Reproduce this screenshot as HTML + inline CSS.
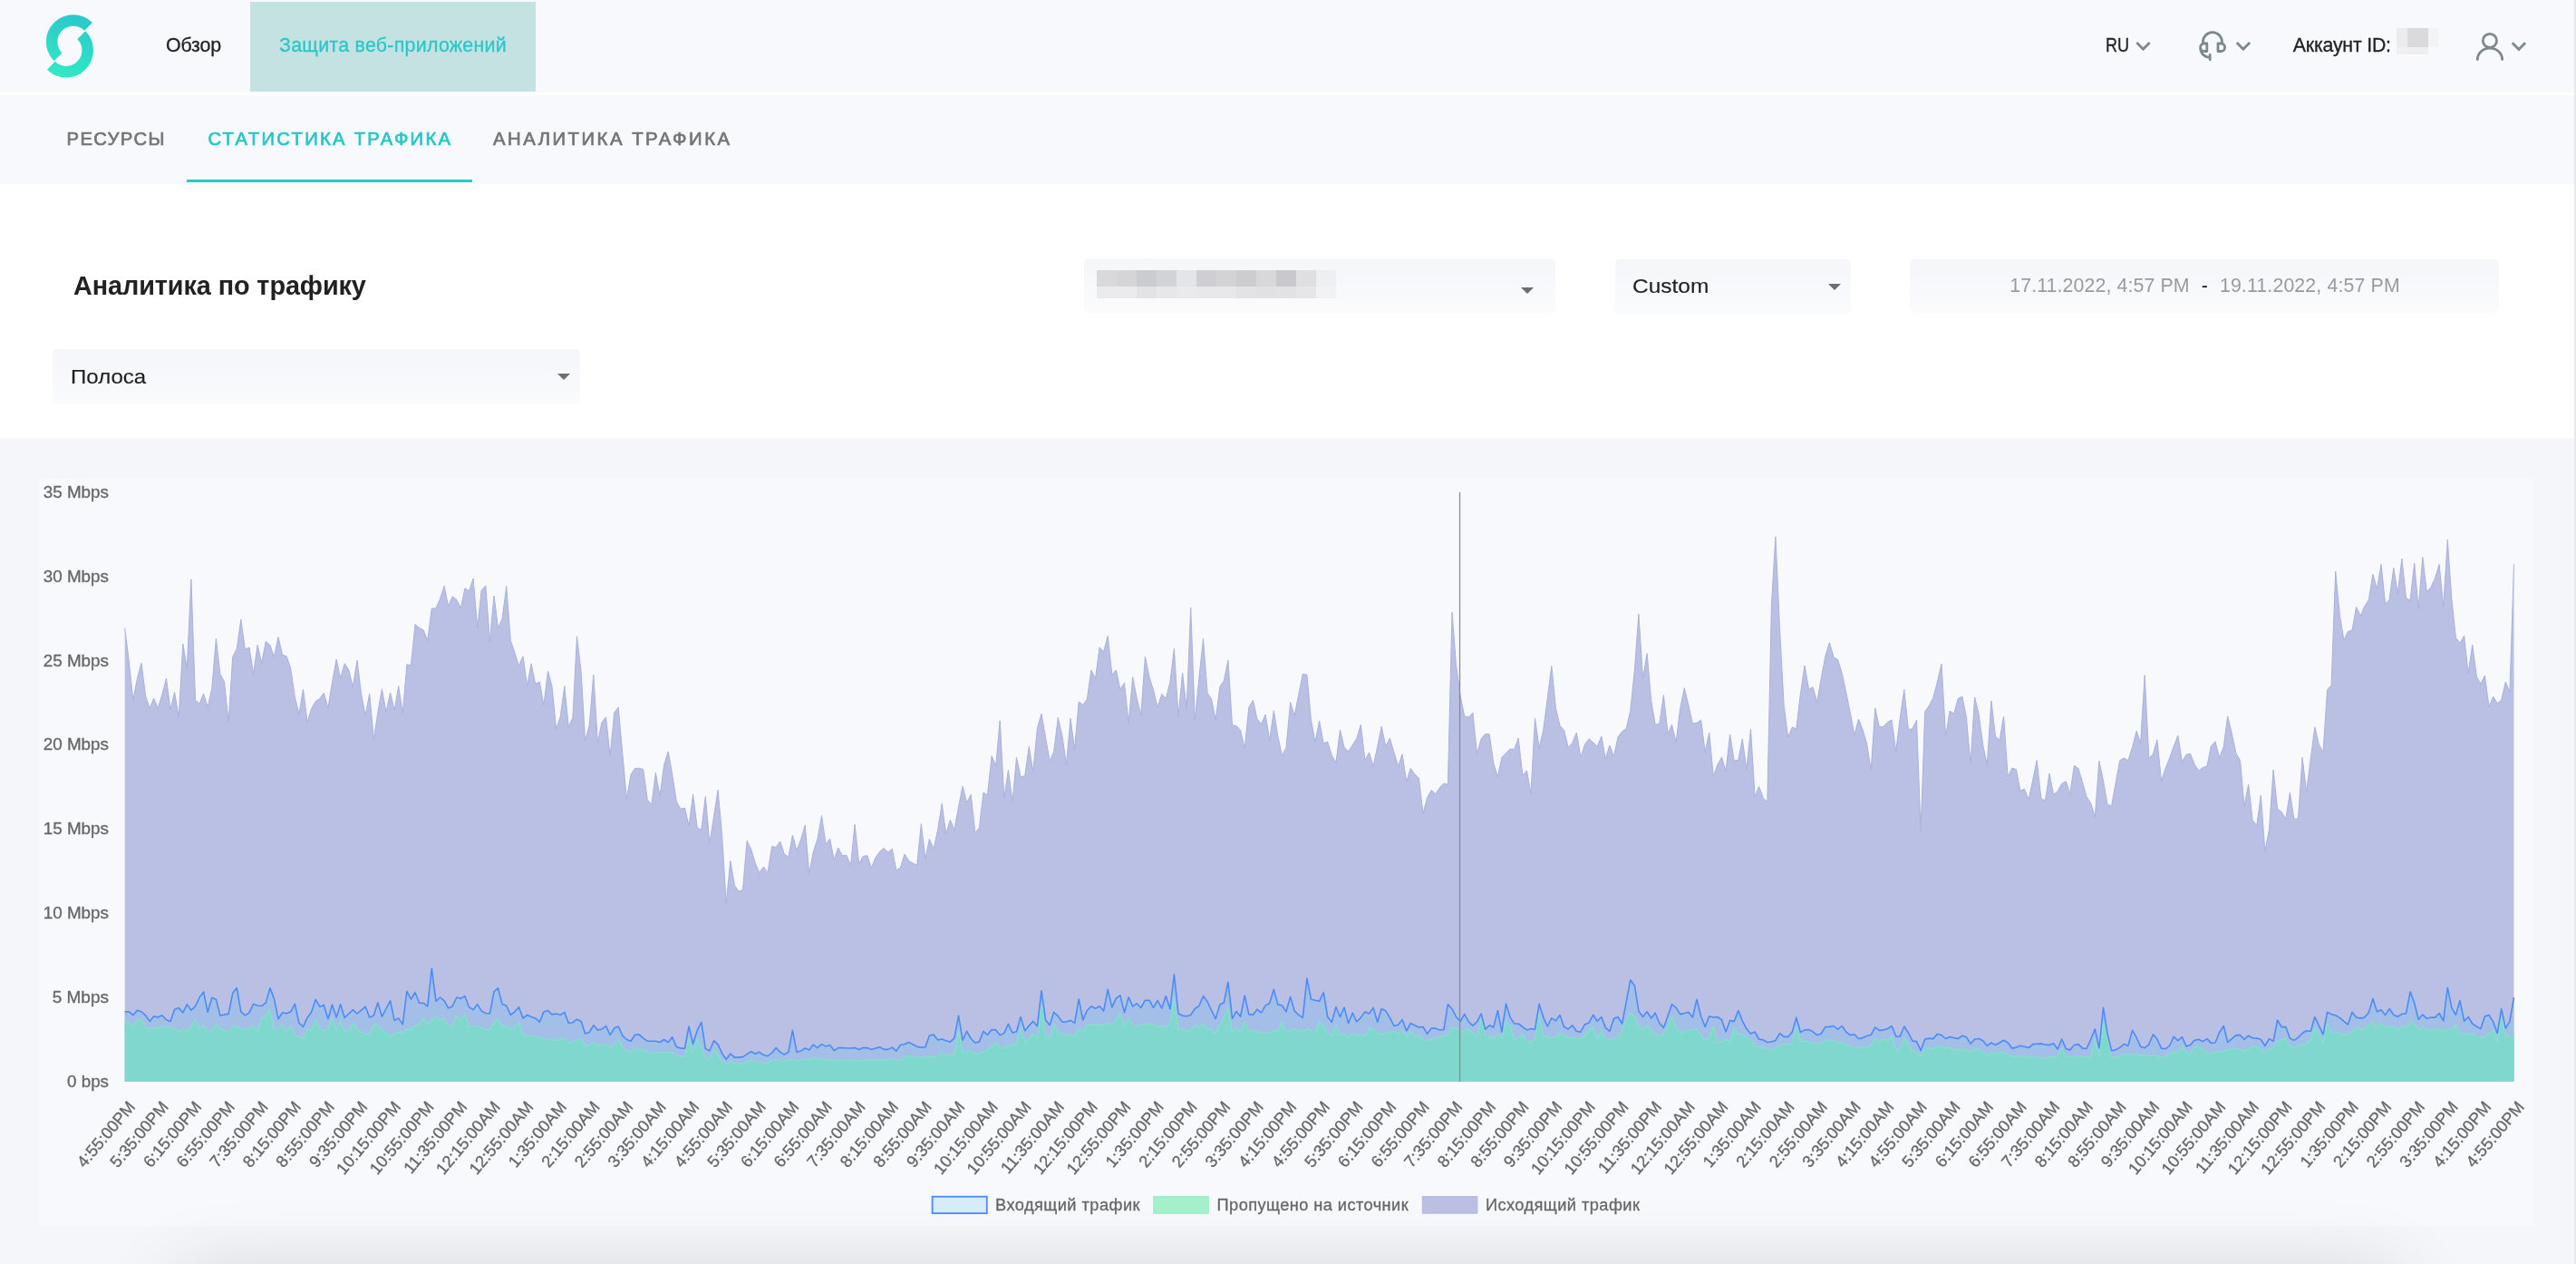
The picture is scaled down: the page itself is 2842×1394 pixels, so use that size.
<!DOCTYPE html>
<html lang="ru"><head><meta charset="utf-8"><title>Статистика трафика</title>
<style>
html,body{margin:0;padding:0;overflow:hidden}
body{width:2842px;height:1394px;overflow:hidden;position:relative;background:#fff;font-family:"Liberation Sans",sans-serif;}
.abs,.t,i{position:absolute;display:block}
.t{white-space:nowrap;line-height:1;}
.sel{position:absolute;border-radius:5px;background:linear-gradient(180deg,#f5f6fa 0%,#fafbfd 100%);}
.tri{position:absolute;width:0;height:0;border-left:7.3px solid transparent;border-right:7.3px solid transparent;border-top:7.4px solid #6e6e70}
svg text{font-family:"Liberation Sans",sans-serif}
</style></head><body><div id="root" style="position:absolute;left:0;top:0;width:2842px;height:1394px;overflow:hidden;will-change:transform">
<div class="abs" style="left:0;top:0;width:2842px;height:102px;background:#f8f9fd"></div>
<div class="abs" style="left:276px;top:2px;width:315px;height:99px;background:#c5e2e2"></div>
<div class="abs" style="left:0;top:105px;width:2842px;height:98px;background:#f8f9fd"></div>
<div class="abs" style="left:206px;top:198px;width:315px;height:3px;background:#26c9c9"></div>
<div class="abs" style="left:0;top:483px;width:2842px;height:911px;background:#f5f6fa"></div>
<div class="abs" style="left:43px;top:528px;width:2752px;height:824px;background:#f8f9fd"></div>
<div class="abs" id="shadow" style="left:228px;top:1440px;width:2385px;height:100px;box-shadow:0 0 90px 30px rgba(0,0,0,0.16)"></div>

<svg class="abs" style="left:40px;top:8px" width="76" height="86" viewBox="40 8 76 86">
<defs><linearGradient id="lg" gradientUnits="userSpaceOnUse" x1="88" y1="15" x2="66" y2="87"><stop offset="0" stop-color="#2ac6cc"/><stop offset="1" stop-color="#31ebc4"/></linearGradient></defs>
<g fill="none" stroke="url(#lg)" stroke-width="12.5">
<path d="M97.54,29.36 A23.67,23.67 0 0 0 64.06,62.84"/>
<path d="M89.8,38.76 A23.67,23.67 0 0 1 56.32,72.24"/>
</g></svg>

<span class="t" id="t_obzor" style="left:183px;top:39.74px;font-size:21.33px;color:#222;letter-spacing:-0.152px;-webkit-text-stroke:0.3px #222;">Обзор</span><span class="t" id="t_zash" style="left:308px;top:39.74px;font-size:21.33px;color:#2ac7c9;letter-spacing:0.289px;-webkit-text-stroke:0.3px #2ac7c9;">Защита веб-приложений</span>
<span class="t" id="t_res" style="left:73.5px;top:142.62px;font-size:20.3px;color:#757575;letter-spacing:1.348px;-webkit-text-stroke:0.7px #757575;">РЕСУРСЫ</span><span class="t" id="t_stat" style="left:229.4px;top:142.62px;font-size:20.3px;color:#26c6c8;letter-spacing:2.255px;-webkit-text-stroke:0.7px #26c6c8;">СТАТИСТИКА ТРАФИКА</span><span class="t" id="t_anal" style="left:544px;top:142.62px;font-size:20.3px;color:#757575;letter-spacing:2.517px;-webkit-text-stroke:0.7px #757575;">АНАЛИТИКА ТРАФИКА</span>
<span class="t" id="t_ru" style="left:2322.7px;top:39.74px;font-size:21.33px;color:#222;letter-spacing:0px;-webkit-text-stroke:0.3px #222;transform:scaleX(0.8471);transform-origin:0 0;">RU</span><span class="t" id="t_acc" style="left:2529.8px;top:39.74px;font-size:21.33px;color:#222;letter-spacing:-0.218px;-webkit-text-stroke:0.3px #222;">Аккаунт ID:</span>
<i style="left:2644.0px;top:31px;width:11.5px;height:20.5px;background:#ececef"></i><i style="left:2655.5px;top:31px;width:11.5px;height:20.5px;background:#dadadd"></i><i style="left:2667.0px;top:31px;width:11.5px;height:20.5px;background:#dadadd"></i><i style="left:2678.5px;top:31px;width:11.5px;height:20.5px;background:#f3f3f6"></i><i style="left:2644.0px;top:51.5px;width:11.5px;height:8.2px;background:#f0f0f3"></i><i style="left:2655.5px;top:51.5px;width:11.5px;height:8.2px;background:#efeff2"></i><i style="left:2667.0px;top:51.5px;width:11.5px;height:8.2px;background:#efeff2"></i><i style="left:2678.5px;top:51.5px;width:11.5px;height:8.2px;background:#f8f9fd"></i>

<svg class="abs" style="left:2300px;top:20px" width="520" height="60" viewBox="2300 20 520 60" fill="none" stroke="#7d8988" stroke-width="2.8">
<path d="M2357.4,47.1 L2364.5,54.2 L2371.6,47.1"/>
<path d="M2467.7,47.1 L2474.9,54.3 L2482.1,47.1"/>
<path d="M2771.7,47.2 L2778.9,54.4 L2786.1,47.2"/>
<path d="M2430.4,48 V46.5 A10.55,10.9 0 0 1 2451.5,46.5 V48"/>
<path d="M2434.8,48 H2431.6 A4,4.25 0 0 0 2431.6,56.5 H2434.8 Z" stroke-linejoin="round"/>
<path d="M2447,48 H2450.6 A4,4.25 0 0 1 2450.6,56.5 H2447 Z" stroke-linejoin="round"/>
<path d="M2427.8,54 C2428,59.5 2432.5,63 2438.2,63.4 M2438.2,60.4 V65.8" stroke-linecap="round"/>
<circle cx="2746.9" cy="44.9" r="7.6"/>
<path d="M2733.3,65.6 A13.65,12.4 0 0 1 2760.6,65.6" stroke-linecap="round"/>
</svg>

<span class="t" id="t_title" style="left:81.1px;top:301.42px;font-size:28.8px;color:#212121;letter-spacing:-0.088px;font-weight:bold;">Аналитика по трафику</span>
<div class="sel" style="left:1196px;top:285px;width:520px;height:60px"></div><i style="left:1210px;top:298px;width:22px;height:18px;background:#d9d9dc"></i><i style="left:1232px;top:298px;width:22px;height:18px;background:#d5d5d8"></i><i style="left:1254px;top:298px;width:22px;height:18px;background:#cbccd0"></i><i style="left:1276px;top:298px;width:22px;height:18px;background:#d2d3d6"></i><i style="left:1298px;top:298px;width:22px;height:18px;background:#e4e5e9"></i><i style="left:1320px;top:298px;width:22px;height:18px;background:#cfcfd3"></i><i style="left:1342px;top:298px;width:22px;height:18px;background:#d3d3d6"></i><i style="left:1364px;top:298px;width:22px;height:18px;background:#cdcdd1"></i><i style="left:1386px;top:298px;width:22px;height:18px;background:#d8d8db"></i><i style="left:1408px;top:298px;width:22px;height:18px;background:#c9c9cd"></i><i style="left:1430px;top:298px;width:22px;height:18px;background:#dfdfe2"></i><i style="left:1452px;top:298px;width:22px;height:18px;background:#eeeff3"></i><i style="left:1210px;top:316px;width:22px;height:13px;background:#ebebee"></i><i style="left:1232px;top:316px;width:22px;height:13px;background:#ebebee"></i><i style="left:1254px;top:316px;width:22px;height:13px;background:#e3e3e7"></i><i style="left:1276px;top:316px;width:22px;height:13px;background:#e7e7eb"></i><i style="left:1298px;top:316px;width:22px;height:13px;background:#eaeaee"></i><i style="left:1320px;top:316px;width:22px;height:13px;background:#e8e8eb"></i><i style="left:1342px;top:316px;width:22px;height:13px;background:#e8e8eb"></i><i style="left:1364px;top:316px;width:22px;height:13px;background:#e3e3e6"></i><i style="left:1386px;top:316px;width:22px;height:13px;background:#e1e1e4"></i><i style="left:1408px;top:316px;width:22px;height:13px;background:#e2e2e5"></i><i style="left:1430px;top:316px;width:22px;height:13px;background:#e6e6e9"></i><i style="left:1452px;top:316px;width:22px;height:13px;background:#f2f2f6"></i>
<div class="tri" style="left:1678px;top:317px"></div>
<div class="sel" style="left:1782px;top:286px;width:260px;height:61px"></div><span class="t" id="t_custom" style="left:1801.2px;top:304.41px;font-size:22.67px;color:#1f1f1f;letter-spacing:0px;-webkit-text-stroke:0.15px #1f1f1f;transform:scaleX(1.0799);transform-origin:0 0;">Custom</span>
<div class="tri" style="left:2017px;top:313px"></div>
<div class="sel" style="left:2107px;top:286px;width:650px;height:59px"></div><span class="t" id="t_d1" style="left:2217.2px;top:304.54px;font-size:21.33px;color:#9a9a9a;letter-spacing:0.108px;">17.11.2022, 4:57 PM</span><span class="t" id="t_dash" style="left:2428.7px;top:304.54px;font-size:21.33px;color:#111;letter-spacing:0px;">-</span><span class="t" id="t_d2" style="left:2448.9px;top:304.54px;font-size:21.33px;color:#9a9a9a;letter-spacing:0.13px;">19.11.2022, 4:57 PM</span>
<div class="sel" style="left:58px;top:385px;width:582px;height:61px"></div><span class="t" id="t_polosa" style="left:78.4px;top:403.51px;font-size:22.67px;color:#1f1f1f;letter-spacing:0px;-webkit-text-stroke:0.15px #1f1f1f;transform:scaleX(1.0614);transform-origin:0 0;">Полоса</span>
<div class="tri" style="left:614.6px;top:412px"></div>

<svg class="abs" style="left:0;top:483px" width="2842" height="911" viewBox="0 483 2842 911">
<polygon points="137.7,1192.8 137.7,692.5 142.3,729.7 146.9,772.3 151.4,748.4 156.0,731.3 160.6,767.6 165.2,781.1 169.7,770.2 174.3,781.1 178.9,765.9 183.5,748.1 188.0,782.8 192.6,763.3 197.2,791.6 201.8,710.1 206.3,737.4 210.9,638.9 215.5,772.0 220.1,776.0 224.6,765.0 229.2,779.9 233.8,758.9 238.4,704.2 242.9,743.7 247.5,751.9 252.1,796.5 256.7,724.5 261.3,715.2 265.8,683.2 270.4,716.1 275.0,714.0 279.6,743.3 284.1,711.4 288.7,731.3 293.3,707.2 297.9,711.4 302.4,724.5 307.0,702.6 311.6,722.2 316.2,723.9 320.7,737.1 325.3,768.5 329.9,787.4 334.5,760.1 339.0,796.5 343.6,781.6 348.2,773.4 352.8,770.6 357.3,764.3 361.9,780.7 366.5,752.8 371.1,727.1 375.7,747.9 380.2,731.8 384.8,739.1 389.4,757.5 394.0,728.3 398.5,765.0 403.1,789.1 407.7,765.0 412.3,815.3 416.8,786.0 421.4,759.8 426.0,785.6 430.6,764.0 435.1,783.7 439.7,756.6 444.3,786.5 448.9,732.7 453.4,733.9 458.0,688.5 462.6,692.5 467.2,694.8 471.7,706.5 476.3,671.0 480.9,671.0 485.5,660.5 490.1,646.2 494.6,668.6 499.2,657.9 503.8,661.4 508.4,670.7 512.9,648.8 517.5,651.8 522.1,638.0 526.7,692.5 531.2,651.1 535.8,645.9 540.4,707.4 545.0,657.0 549.5,693.0 554.1,682.0 558.7,646.6 563.3,706.5 567.8,719.6 572.4,734.4 577.0,723.9 581.6,756.4 586.1,731.9 590.7,754.3 595.3,752.0 599.9,778.2 604.5,740.3 609.0,756.9 613.6,804.4 618.2,790.5 622.8,756.7 627.3,802.2 631.9,791.3 636.5,701.9 641.1,740.7 645.6,817.2 650.2,800.1 654.8,744.2 659.4,819.6 663.9,796.9 668.5,790.8 673.1,834.1 677.7,786.1 682.2,780.0 686.8,831.5 691.4,881.3 696.0,854.2 700.5,847.6 705.1,847.2 709.7,848.5 714.3,882.2 718.9,887.4 723.4,852.1 728.0,878.3 732.6,843.7 737.2,828.9 741.7,854.2 746.3,883.9 750.9,892.3 755.5,891.1 760.0,910.8 764.6,875.9 769.2,912.6 773.8,915.2 778.3,878.5 782.9,930.1 787.5,900.7 792.1,871.2 796.6,921.3 801.2,996.5 805.8,949.3 810.4,976.4 814.9,983.0 819.5,981.6 824.1,927.1 828.7,936.7 833.3,951.9 837.8,962.4 842.4,955.9 847.0,962.4 851.6,933.6 856.1,934.4 860.7,928.0 865.3,941.8 869.9,945.3 874.4,921.0 879.0,937.9 883.6,925.7 888.2,910.0 892.7,963.3 897.3,939.7 901.9,925.3 906.5,899.5 911.0,930.9 915.6,925.2 920.2,948.1 924.8,935.0 929.3,943.7 933.9,943.2 938.5,954.5 943.1,909.1 947.7,952.8 952.2,944.4 956.8,943.5 961.4,957.1 966.0,945.8 970.5,939.3 975.1,935.3 979.7,940.0 984.3,936.2 988.8,959.8 993.4,957.1 998.0,941.9 1002.6,949.3 1007.1,951.9 1011.7,954.2 1016.3,908.7 1020.9,947.2 1025.4,925.3 1030.0,936.2 1034.6,915.2 1039.2,886.4 1043.7,919.6 1048.3,904.2 1052.9,915.2 1057.5,889.9 1062.1,867.2 1066.6,885.2 1071.2,876.3 1075.8,918.2 1080.4,912.9 1084.9,874.2 1089.5,876.8 1094.1,833.6 1098.7,844.5 1103.2,794.9 1107.8,880.3 1112.4,849.4 1117.0,884.3 1121.5,835.4 1126.1,856.7 1130.7,855.8 1135.3,823.3 1139.8,851.4 1144.4,802.9 1149.0,787.2 1153.6,813.7 1158.1,839.1 1162.7,828.9 1167.3,791.4 1171.9,811.5 1176.5,843.4 1181.0,792.3 1185.6,826.3 1190.2,773.9 1194.8,777.4 1199.3,771.3 1203.9,739.1 1208.5,748.7 1213.1,713.8 1217.6,719.0 1222.2,701.4 1226.8,743.9 1231.4,739.1 1235.9,760.5 1240.5,753.1 1245.1,797.5 1249.7,746.8 1254.2,770.1 1258.8,788.8 1263.4,724.1 1268.0,746.8 1272.5,761.0 1277.1,780.2 1281.7,765.3 1286.3,770.4 1290.9,752.2 1295.4,715.4 1300.0,790.7 1304.6,742.1 1309.2,781.4 1313.7,670.0 1318.3,794.5 1322.9,747.4 1327.5,704.5 1332.0,763.9 1336.6,771.3 1341.2,794.0 1345.8,757.5 1350.3,750.8 1354.9,728.1 1359.5,799.8 1364.1,800.6 1368.6,805.4 1373.2,825.6 1377.8,780.2 1382.4,772.2 1386.9,792.8 1391.5,798.4 1396.1,788.1 1400.7,816.4 1405.3,783.7 1409.8,812.0 1414.4,833.3 1419.0,824.2 1423.6,774.4 1428.1,789.3 1432.7,766.2 1437.3,743.3 1441.9,744.2 1446.4,793.6 1451.0,818.5 1455.6,795.0 1460.2,819.9 1464.7,818.1 1469.3,833.0 1473.9,841.2 1478.5,805.0 1483.0,824.2 1487.6,828.9 1492.2,821.6 1496.8,814.6 1501.3,799.2 1505.9,838.2 1510.5,830.0 1515.1,845.2 1519.7,823.3 1524.2,801.0 1528.8,823.4 1533.4,814.1 1538.0,829.9 1542.5,845.2 1547.1,831.9 1551.7,862.2 1556.3,847.3 1560.8,853.8 1565.4,858.2 1570.0,897.1 1574.6,879.6 1579.1,871.4 1583.7,875.6 1588.3,868.8 1592.9,863.9 1597.4,865.3 1602.0,675.2 1606.6,734.6 1611.2,767.0 1615.7,790.0 1620.3,791.1 1624.9,786.2 1629.5,831.6 1634.1,815.0 1638.6,809.4 1643.2,809.8 1647.8,842.1 1652.4,856.6 1656.9,835.4 1661.5,830.7 1666.1,826.0 1670.7,826.4 1675.2,814.1 1679.8,855.2 1684.4,849.9 1689.0,875.3 1693.5,792.3 1698.1,825.1 1702.7,805.4 1707.3,769.6 1711.8,734.3 1716.4,780.9 1721.0,800.2 1725.6,805.4 1730.1,824.3 1734.7,819.4 1739.3,808.0 1743.9,835.1 1748.5,821.1 1753.0,814.7 1757.6,818.8 1762.2,823.2 1766.8,812.0 1771.3,836.8 1775.9,822.0 1780.5,834.2 1785.1,812.4 1789.6,806.8 1794.2,803.6 1798.8,783.6 1803.4,738.5 1807.9,677.5 1812.5,748.3 1817.1,720.7 1821.7,772.7 1826.2,799.3 1830.8,798.1 1835.4,766.6 1840.0,809.2 1844.5,799.3 1849.1,818.5 1853.7,781.3 1858.3,758.7 1862.9,778.0 1867.4,798.1 1872.0,797.2 1876.6,794.0 1881.2,829.3 1885.7,808.0 1890.3,856.1 1894.9,843.3 1899.5,835.1 1904.0,850.8 1908.6,810.1 1913.2,838.9 1917.8,838.2 1922.3,815.0 1926.9,849.1 1931.5,804.2 1936.1,878.8 1940.6,867.4 1945.2,879.7 1949.8,884.9 1954.4,667.4 1958.9,591.9 1963.5,693.6 1968.1,777.4 1972.7,813.3 1977.3,801.9 1981.8,804.0 1986.4,765.2 1991.0,734.1 1995.6,760.5 2000.1,757.8 2004.7,774.3 2009.3,747.7 2013.9,723.3 2018.4,708.8 2023.0,724.7 2027.6,727.6 2032.2,742.5 2036.7,763.4 2041.3,786.1 2045.9,810.7 2050.5,793.2 2055.0,804.5 2059.6,820.3 2064.2,849.6 2068.8,781.0 2073.3,801.6 2077.9,801.6 2082.5,796.2 2087.1,794.1 2091.7,828.7 2096.2,792.3 2100.8,760.5 2105.4,804.5 2110.0,803.7 2114.5,794.1 2119.1,917.2 2123.7,784.8 2128.3,778.3 2132.8,769.6 2137.4,752.1 2142.0,732.0 2146.6,812.1 2151.1,784.1 2155.7,787.1 2160.3,770.4 2164.9,768.2 2169.4,791.1 2174.0,842.6 2178.6,769.0 2183.2,788.3 2187.7,821.5 2192.3,843.5 2196.9,773.0 2201.5,812.1 2206.1,816.3 2210.6,790.0 2215.2,857.0 2219.8,847.0 2224.4,848.6 2228.9,872.3 2233.5,870.1 2238.1,881.9 2242.7,860.5 2247.2,838.6 2251.8,880.2 2256.4,883.5 2261.0,853.1 2265.5,876.2 2270.1,872.7 2274.7,864.3 2279.3,861.7 2283.8,875.3 2288.4,844.2 2293.0,847.4 2297.6,863.1 2302.1,878.8 2306.7,885.8 2311.3,901.2 2315.9,839.1 2320.5,861.3 2325.0,887.2 2329.6,888.8 2334.2,863.1 2338.8,838.6 2343.3,836.0 2347.9,838.6 2352.5,824.3 2357.1,806.3 2361.6,819.9 2366.2,744.7 2370.8,836.0 2375.4,831.6 2379.9,815.9 2384.5,861.3 2389.1,847.4 2393.7,836.0 2398.2,823.2 2402.8,811.2 2407.4,840.4 2412.0,832.2 2416.5,831.3 2421.1,843.0 2425.7,850.0 2430.3,846.5 2434.9,845.1 2439.4,822.9 2444.0,817.7 2448.6,835.5 2453.2,823.8 2457.7,790.0 2462.3,808.9 2466.9,830.8 2471.5,838.6 2476.0,889.3 2480.6,865.2 2485.2,904.5 2489.8,910.2 2494.3,877.1 2498.9,939.1 2503.5,914.6 2508.1,849.1 2512.6,892.3 2517.2,895.4 2521.8,903.3 2526.4,873.9 2530.9,903.3 2535.5,902.9 2540.1,835.5 2544.7,873.2 2549.3,836.9 2553.8,801.9 2558.4,821.1 2563.0,829.4 2567.6,760.8 2572.1,755.6 2576.7,630.1 2581.3,677.8 2585.9,706.1 2590.4,696.5 2595.0,695.0 2599.6,669.4 2604.2,679.2 2608.7,668.7 2613.3,661.6 2617.9,633.3 2622.5,649.5 2627.0,622.3 2631.6,666.1 2636.2,661.2 2640.8,626.3 2645.3,654.6 2649.9,616.2 2654.5,659.5 2659.1,662.1 2663.7,621.1 2668.2,671.4 2672.8,614.4 2677.4,653.0 2682.0,647.3 2686.5,637.7 2691.1,622.3 2695.7,669.4 2700.3,595.2 2704.8,660.4 2709.4,703.2 2714.0,709.3 2718.6,701.1 2723.1,742.8 2727.7,711.0 2732.3,746.0 2736.9,754.2 2741.4,745.1 2746.0,779.5 2750.6,768.2 2755.2,775.7 2759.7,772.2 2764.3,752.1 2768.9,763.4 2773.5,622.3 2773.5,1192.8" fill="#b9c0e3"/>
<polyline points="137.7,692.5 142.3,729.7 146.9,772.3 151.4,748.4 156.0,731.3 160.6,767.6 165.2,781.1 169.7,770.2 174.3,781.1 178.9,765.9 183.5,748.1 188.0,782.8 192.6,763.3 197.2,791.6 201.8,710.1 206.3,737.4 210.9,638.9 215.5,772.0 220.1,776.0 224.6,765.0 229.2,779.9 233.8,758.9 238.4,704.2 242.9,743.7 247.5,751.9 252.1,796.5 256.7,724.5 261.3,715.2 265.8,683.2 270.4,716.1 275.0,714.0 279.6,743.3 284.1,711.4 288.7,731.3 293.3,707.2 297.9,711.4 302.4,724.5 307.0,702.6 311.6,722.2 316.2,723.9 320.7,737.1 325.3,768.5 329.9,787.4 334.5,760.1 339.0,796.5 343.6,781.6 348.2,773.4 352.8,770.6 357.3,764.3 361.9,780.7 366.5,752.8 371.1,727.1 375.7,747.9 380.2,731.8 384.8,739.1 389.4,757.5 394.0,728.3 398.5,765.0 403.1,789.1 407.7,765.0 412.3,815.3 416.8,786.0 421.4,759.8 426.0,785.6 430.6,764.0 435.1,783.7 439.7,756.6 444.3,786.5 448.9,732.7 453.4,733.9 458.0,688.5 462.6,692.5 467.2,694.8 471.7,706.5 476.3,671.0 480.9,671.0 485.5,660.5 490.1,646.2 494.6,668.6 499.2,657.9 503.8,661.4 508.4,670.7 512.9,648.8 517.5,651.8 522.1,638.0 526.7,692.5 531.2,651.1 535.8,645.9 540.4,707.4 545.0,657.0 549.5,693.0 554.1,682.0 558.7,646.6 563.3,706.5 567.8,719.6 572.4,734.4 577.0,723.9 581.6,756.4 586.1,731.9 590.7,754.3 595.3,752.0 599.9,778.2 604.5,740.3 609.0,756.9 613.6,804.4 618.2,790.5 622.8,756.7 627.3,802.2 631.9,791.3 636.5,701.9 641.1,740.7 645.6,817.2 650.2,800.1 654.8,744.2 659.4,819.6 663.9,796.9 668.5,790.8 673.1,834.1 677.7,786.1 682.2,780.0 686.8,831.5 691.4,881.3 696.0,854.2 700.5,847.6 705.1,847.2 709.7,848.5 714.3,882.2 718.9,887.4 723.4,852.1 728.0,878.3 732.6,843.7 737.2,828.9 741.7,854.2 746.3,883.9 750.9,892.3 755.5,891.1 760.0,910.8 764.6,875.9 769.2,912.6 773.8,915.2 778.3,878.5 782.9,930.1 787.5,900.7 792.1,871.2 796.6,921.3 801.2,996.5 805.8,949.3 810.4,976.4 814.9,983.0 819.5,981.6 824.1,927.1 828.7,936.7 833.3,951.9 837.8,962.4 842.4,955.9 847.0,962.4 851.6,933.6 856.1,934.4 860.7,928.0 865.3,941.8 869.9,945.3 874.4,921.0 879.0,937.9 883.6,925.7 888.2,910.0 892.7,963.3 897.3,939.7 901.9,925.3 906.5,899.5 911.0,930.9 915.6,925.2 920.2,948.1 924.8,935.0 929.3,943.7 933.9,943.2 938.5,954.5 943.1,909.1 947.7,952.8 952.2,944.4 956.8,943.5 961.4,957.1 966.0,945.8 970.5,939.3 975.1,935.3 979.7,940.0 984.3,936.2 988.8,959.8 993.4,957.1 998.0,941.9 1002.6,949.3 1007.1,951.9 1011.7,954.2 1016.3,908.7 1020.9,947.2 1025.4,925.3 1030.0,936.2 1034.6,915.2 1039.2,886.4 1043.7,919.6 1048.3,904.2 1052.9,915.2 1057.5,889.9 1062.1,867.2 1066.6,885.2 1071.2,876.3 1075.8,918.2 1080.4,912.9 1084.9,874.2 1089.5,876.8 1094.1,833.6 1098.7,844.5 1103.2,794.9 1107.8,880.3 1112.4,849.4 1117.0,884.3 1121.5,835.4 1126.1,856.7 1130.7,855.8 1135.3,823.3 1139.8,851.4 1144.4,802.9 1149.0,787.2 1153.6,813.7 1158.1,839.1 1162.7,828.9 1167.3,791.4 1171.9,811.5 1176.5,843.4 1181.0,792.3 1185.6,826.3 1190.2,773.9 1194.8,777.4 1199.3,771.3 1203.9,739.1 1208.5,748.7 1213.1,713.8 1217.6,719.0 1222.2,701.4 1226.8,743.9 1231.4,739.1 1235.9,760.5 1240.5,753.1 1245.1,797.5 1249.7,746.8 1254.2,770.1 1258.8,788.8 1263.4,724.1 1268.0,746.8 1272.5,761.0 1277.1,780.2 1281.7,765.3 1286.3,770.4 1290.9,752.2 1295.4,715.4 1300.0,790.7 1304.6,742.1 1309.2,781.4 1313.7,670.0 1318.3,794.5 1322.9,747.4 1327.5,704.5 1332.0,763.9 1336.6,771.3 1341.2,794.0 1345.8,757.5 1350.3,750.8 1354.9,728.1 1359.5,799.8 1364.1,800.6 1368.6,805.4 1373.2,825.6 1377.8,780.2 1382.4,772.2 1386.9,792.8 1391.5,798.4 1396.1,788.1 1400.7,816.4 1405.3,783.7 1409.8,812.0 1414.4,833.3 1419.0,824.2 1423.6,774.4 1428.1,789.3 1432.7,766.2 1437.3,743.3 1441.9,744.2 1446.4,793.6 1451.0,818.5 1455.6,795.0 1460.2,819.9 1464.7,818.1 1469.3,833.0 1473.9,841.2 1478.5,805.0 1483.0,824.2 1487.6,828.9 1492.2,821.6 1496.8,814.6 1501.3,799.2 1505.9,838.2 1510.5,830.0 1515.1,845.2 1519.7,823.3 1524.2,801.0 1528.8,823.4 1533.4,814.1 1538.0,829.9 1542.5,845.2 1547.1,831.9 1551.7,862.2 1556.3,847.3 1560.8,853.8 1565.4,858.2 1570.0,897.1 1574.6,879.6 1579.1,871.4 1583.7,875.6 1588.3,868.8 1592.9,863.9 1597.4,865.3 1602.0,675.2 1606.6,734.6 1611.2,767.0 1615.7,790.0 1620.3,791.1 1624.9,786.2 1629.5,831.6 1634.1,815.0 1638.6,809.4 1643.2,809.8 1647.8,842.1 1652.4,856.6 1656.9,835.4 1661.5,830.7 1666.1,826.0 1670.7,826.4 1675.2,814.1 1679.8,855.2 1684.4,849.9 1689.0,875.3 1693.5,792.3 1698.1,825.1 1702.7,805.4 1707.3,769.6 1711.8,734.3 1716.4,780.9 1721.0,800.2 1725.6,805.4 1730.1,824.3 1734.7,819.4 1739.3,808.0 1743.9,835.1 1748.5,821.1 1753.0,814.7 1757.6,818.8 1762.2,823.2 1766.8,812.0 1771.3,836.8 1775.9,822.0 1780.5,834.2 1785.1,812.4 1789.6,806.8 1794.2,803.6 1798.8,783.6 1803.4,738.5 1807.9,677.5 1812.5,748.3 1817.1,720.7 1821.7,772.7 1826.2,799.3 1830.8,798.1 1835.4,766.6 1840.0,809.2 1844.5,799.3 1849.1,818.5 1853.7,781.3 1858.3,758.7 1862.9,778.0 1867.4,798.1 1872.0,797.2 1876.6,794.0 1881.2,829.3 1885.7,808.0 1890.3,856.1 1894.9,843.3 1899.5,835.1 1904.0,850.8 1908.6,810.1 1913.2,838.9 1917.8,838.2 1922.3,815.0 1926.9,849.1 1931.5,804.2 1936.1,878.8 1940.6,867.4 1945.2,879.7 1949.8,884.9 1954.4,667.4 1958.9,591.9 1963.5,693.6 1968.1,777.4 1972.7,813.3 1977.3,801.9 1981.8,804.0 1986.4,765.2 1991.0,734.1 1995.6,760.5 2000.1,757.8 2004.7,774.3 2009.3,747.7 2013.9,723.3 2018.4,708.8 2023.0,724.7 2027.6,727.6 2032.2,742.5 2036.7,763.4 2041.3,786.1 2045.9,810.7 2050.5,793.2 2055.0,804.5 2059.6,820.3 2064.2,849.6 2068.8,781.0 2073.3,801.6 2077.9,801.6 2082.5,796.2 2087.1,794.1 2091.7,828.7 2096.2,792.3 2100.8,760.5 2105.4,804.5 2110.0,803.7 2114.5,794.1 2119.1,917.2 2123.7,784.8 2128.3,778.3 2132.8,769.6 2137.4,752.1 2142.0,732.0 2146.6,812.1 2151.1,784.1 2155.7,787.1 2160.3,770.4 2164.9,768.2 2169.4,791.1 2174.0,842.6 2178.6,769.0 2183.2,788.3 2187.7,821.5 2192.3,843.5 2196.9,773.0 2201.5,812.1 2206.1,816.3 2210.6,790.0 2215.2,857.0 2219.8,847.0 2224.4,848.6 2228.9,872.3 2233.5,870.1 2238.1,881.9 2242.7,860.5 2247.2,838.6 2251.8,880.2 2256.4,883.5 2261.0,853.1 2265.5,876.2 2270.1,872.7 2274.7,864.3 2279.3,861.7 2283.8,875.3 2288.4,844.2 2293.0,847.4 2297.6,863.1 2302.1,878.8 2306.7,885.8 2311.3,901.2 2315.9,839.1 2320.5,861.3 2325.0,887.2 2329.6,888.8 2334.2,863.1 2338.8,838.6 2343.3,836.0 2347.9,838.6 2352.5,824.3 2357.1,806.3 2361.6,819.9 2366.2,744.7 2370.8,836.0 2375.4,831.6 2379.9,815.9 2384.5,861.3 2389.1,847.4 2393.7,836.0 2398.2,823.2 2402.8,811.2 2407.4,840.4 2412.0,832.2 2416.5,831.3 2421.1,843.0 2425.7,850.0 2430.3,846.5 2434.9,845.1 2439.4,822.9 2444.0,817.7 2448.6,835.5 2453.2,823.8 2457.7,790.0 2462.3,808.9 2466.9,830.8 2471.5,838.6 2476.0,889.3 2480.6,865.2 2485.2,904.5 2489.8,910.2 2494.3,877.1 2498.9,939.1 2503.5,914.6 2508.1,849.1 2512.6,892.3 2517.2,895.4 2521.8,903.3 2526.4,873.9 2530.9,903.3 2535.5,902.9 2540.1,835.5 2544.7,873.2 2549.3,836.9 2553.8,801.9 2558.4,821.1 2563.0,829.4 2567.6,760.8 2572.1,755.6 2576.7,630.1 2581.3,677.8 2585.9,706.1 2590.4,696.5 2595.0,695.0 2599.6,669.4 2604.2,679.2 2608.7,668.7 2613.3,661.6 2617.9,633.3 2622.5,649.5 2627.0,622.3 2631.6,666.1 2636.2,661.2 2640.8,626.3 2645.3,654.6 2649.9,616.2 2654.5,659.5 2659.1,662.1 2663.7,621.1 2668.2,671.4 2672.8,614.4 2677.4,653.0 2682.0,647.3 2686.5,637.7 2691.1,622.3 2695.7,669.4 2700.3,595.2 2704.8,660.4 2709.4,703.2 2714.0,709.3 2718.6,701.1 2723.1,742.8 2727.7,711.0 2732.3,746.0 2736.9,754.2 2741.4,745.1 2746.0,779.5 2750.6,768.2 2755.2,775.7 2759.7,772.2 2764.3,752.1 2768.9,763.4 2773.5,622.3" fill="none" stroke="#aab1dd" stroke-width="1" stroke-linejoin="round"/>
<polygon points="137.7,1192.8 137.7,1115.8 142.3,1115.8 146.9,1119.4 151.4,1114.2 156.0,1115.8 160.6,1119.8 165.2,1126.4 169.7,1120.8 174.3,1121.9 178.9,1119.8 183.5,1124.7 188.0,1126.4 192.6,1113.2 197.2,1111.6 201.8,1116.8 206.3,1107.6 210.9,1114.2 215.5,1109.8 220.1,1100.0 224.6,1093.9 229.2,1116.3 233.8,1100.2 238.4,1102.3 242.9,1120.1 247.5,1118.9 252.1,1118.4 256.7,1095.3 261.3,1089.6 265.8,1115.8 270.4,1119.8 275.0,1116.8 279.6,1107.2 284.1,1109.0 288.7,1109.3 293.3,1105.8 297.9,1089.6 302.4,1101.4 307.0,1123.8 311.6,1116.8 316.2,1117.7 320.7,1115.8 325.3,1107.2 329.9,1128.2 334.5,1132.4 339.0,1122.4 343.6,1116.3 348.2,1102.3 352.8,1110.2 357.3,1108.4 361.9,1123.8 366.5,1107.9 371.1,1121.9 375.7,1107.6 380.2,1122.4 384.8,1118.0 389.4,1113.7 394.0,1118.0 398.5,1114.2 403.1,1110.2 407.7,1121.9 412.3,1120.1 416.8,1105.8 421.4,1121.2 426.0,1112.5 430.6,1103.7 435.1,1125.4 439.7,1122.9 444.3,1129.9 448.9,1093.2 453.4,1102.0 458.0,1094.5 462.6,1106.2 467.2,1106.2 471.7,1109.8 476.3,1068.1 480.9,1104.1 485.5,1100.0 490.1,1103.7 494.6,1111.9 499.2,1109.7 503.8,1100.0 508.4,1101.1 512.9,1098.5 517.5,1110.7 522.1,1113.7 526.7,1107.6 531.2,1114.9 535.8,1117.5 540.4,1117.7 545.0,1093.6 549.5,1089.7 554.1,1107.6 558.7,1109.0 563.3,1119.4 567.8,1115.8 572.4,1110.7 577.0,1122.9 581.6,1119.3 586.1,1121.5 590.7,1122.9 595.3,1127.1 599.9,1115.9 604.5,1114.5 609.0,1118.9 613.6,1118.0 618.2,1119.3 622.8,1116.3 627.3,1128.2 631.9,1127.7 636.5,1124.2 641.1,1126.3 645.6,1139.9 650.2,1138.5 654.8,1130.8 659.4,1135.9 663.9,1135.2 668.5,1131.5 673.1,1141.6 677.7,1133.8 682.2,1132.0 686.8,1142.2 691.4,1146.5 696.0,1148.3 700.5,1141.3 705.1,1140.8 709.7,1145.1 714.3,1148.1 718.9,1148.3 723.4,1148.3 728.0,1149.5 732.6,1146.5 737.2,1149.5 741.7,1143.7 746.3,1154.4 750.9,1156.1 755.5,1156.1 760.0,1132.0 764.6,1151.2 769.2,1136.4 773.8,1127.3 778.3,1156.5 782.9,1158.7 787.5,1147.7 792.1,1151.8 796.6,1161.7 801.2,1168.2 805.8,1162.2 810.4,1166.1 814.9,1166.1 819.5,1165.6 824.1,1162.6 828.7,1159.6 833.3,1162.2 837.8,1160.3 842.4,1163.5 847.0,1164.7 851.6,1161.2 856.1,1155.6 860.7,1160.3 865.3,1163.1 869.9,1160.3 874.4,1136.4 879.0,1160.3 883.6,1159.1 888.2,1156.0 892.7,1157.9 897.3,1152.1 901.9,1155.6 906.5,1151.6 911.0,1153.9 915.6,1152.6 920.2,1158.6 924.8,1155.6 929.3,1155.6 933.9,1156.0 938.5,1156.0 943.1,1155.6 947.7,1157.4 952.2,1155.6 956.8,1155.6 961.4,1157.4 966.0,1156.1 970.5,1154.7 975.1,1157.4 979.7,1157.4 984.3,1155.1 988.8,1159.1 993.4,1152.5 998.0,1151.8 1002.6,1149.5 1007.1,1151.8 1011.7,1154.2 1016.3,1155.1 1020.9,1154.7 1025.4,1142.0 1030.0,1141.1 1034.6,1146.9 1039.2,1146.0 1043.7,1147.7 1048.3,1149.1 1052.9,1144.8 1057.5,1120.1 1062.1,1147.2 1066.6,1137.3 1071.2,1145.5 1075.8,1150.0 1080.4,1149.1 1084.9,1137.3 1089.5,1141.3 1094.1,1135.5 1098.7,1135.9 1103.2,1141.6 1107.8,1139.4 1112.4,1129.4 1117.0,1139.0 1121.5,1137.8 1126.1,1121.5 1130.7,1136.7 1135.3,1131.1 1139.8,1126.4 1144.4,1131.7 1149.0,1092.7 1153.6,1125.0 1158.1,1130.6 1162.7,1116.3 1167.3,1120.7 1171.9,1127.1 1176.5,1126.8 1181.0,1125.4 1185.6,1128.2 1190.2,1101.8 1194.8,1125.0 1199.3,1114.5 1203.9,1109.7 1208.5,1112.3 1213.1,1109.7 1217.6,1115.1 1222.2,1091.3 1226.8,1111.1 1231.4,1100.9 1235.9,1097.6 1240.5,1116.8 1245.1,1099.7 1249.7,1109.8 1254.2,1106.7 1258.8,1111.4 1263.4,1103.2 1268.0,1103.2 1272.5,1111.4 1277.1,1103.5 1281.7,1111.9 1286.3,1098.5 1290.9,1112.8 1295.4,1074.9 1300.0,1118.0 1304.6,1120.1 1309.2,1120.7 1313.7,1119.4 1318.3,1112.5 1322.9,1109.3 1327.5,1098.5 1332.0,1104.6 1336.6,1114.5 1341.2,1123.6 1345.8,1107.9 1350.3,1105.8 1354.9,1083.1 1359.5,1123.3 1364.1,1115.4 1368.6,1121.2 1373.2,1098.0 1377.8,1118.6 1382.4,1119.3 1386.9,1113.2 1391.5,1116.8 1396.1,1109.0 1400.7,1106.2 1405.3,1091.3 1409.8,1107.9 1414.4,1108.8 1419.0,1115.8 1423.6,1099.2 1428.1,1114.9 1432.7,1119.4 1437.3,1122.4 1441.9,1079.1 1446.4,1102.0 1451.0,1103.2 1455.6,1104.1 1460.2,1094.5 1464.7,1121.5 1469.3,1127.3 1473.9,1110.5 1478.5,1121.5 1483.0,1111.1 1487.6,1128.5 1492.2,1117.2 1496.8,1126.8 1501.3,1122.4 1505.9,1115.9 1510.5,1118.0 1515.1,1111.4 1519.7,1127.3 1524.2,1112.5 1528.8,1114.9 1533.4,1122.4 1538.0,1131.5 1542.5,1130.3 1547.1,1124.5 1551.7,1136.9 1556.3,1128.5 1560.8,1130.8 1565.4,1132.9 1570.0,1132.5 1574.6,1140.2 1579.1,1134.1 1583.7,1134.1 1588.3,1136.0 1592.9,1135.5 1597.4,1107.6 1602.0,1112.8 1606.6,1121.5 1611.2,1126.4 1615.7,1118.4 1620.3,1126.8 1624.9,1131.1 1629.5,1126.8 1634.1,1118.0 1638.6,1135.2 1643.2,1130.8 1647.8,1132.9 1652.4,1114.5 1656.9,1138.1 1661.5,1107.0 1666.1,1122.1 1670.7,1128.9 1675.2,1129.0 1679.8,1132.5 1684.4,1135.9 1689.0,1134.6 1693.5,1135.2 1698.1,1107.2 1702.7,1121.9 1707.3,1132.0 1711.8,1122.8 1716.4,1125.9 1721.0,1119.4 1725.6,1132.5 1730.1,1135.0 1734.7,1130.8 1739.3,1137.3 1743.9,1138.1 1748.5,1129.7 1753.0,1128.0 1757.6,1119.3 1762.2,1126.3 1766.8,1121.5 1771.3,1133.4 1775.9,1137.3 1780.5,1123.3 1785.1,1121.5 1789.6,1129.0 1794.2,1104.9 1798.8,1080.8 1803.4,1086.9 1807.9,1115.1 1812.5,1121.5 1817.1,1115.8 1821.7,1122.9 1826.2,1117.2 1830.8,1128.5 1835.4,1133.4 1840.0,1120.7 1844.5,1107.6 1849.1,1111.1 1853.7,1118.6 1858.3,1117.5 1862.9,1116.3 1867.4,1122.1 1872.0,1102.3 1876.6,1120.7 1881.2,1132.4 1885.7,1120.7 1890.3,1122.1 1894.9,1121.5 1899.5,1124.7 1904.0,1138.1 1908.6,1125.4 1913.2,1126.4 1917.8,1114.5 1922.3,1125.9 1926.9,1134.6 1931.5,1139.9 1936.1,1138.1 1940.6,1146.0 1945.2,1146.9 1949.8,1149.5 1954.4,1149.0 1958.9,1147.4 1963.5,1139.5 1968.1,1143.4 1972.7,1143.4 1977.3,1138.1 1981.8,1122.1 1986.4,1138.5 1991.0,1135.9 1995.6,1135.5 2000.1,1137.8 2004.7,1141.6 2009.3,1139.9 2013.9,1132.5 2018.4,1132.4 2023.0,1131.5 2027.6,1135.2 2032.2,1131.5 2036.7,1138.1 2041.3,1141.6 2045.9,1140.8 2050.5,1145.5 2055.0,1144.6 2059.6,1142.5 2064.2,1141.3 2068.8,1132.9 2073.3,1136.4 2077.9,1135.9 2082.5,1134.6 2087.1,1131.5 2091.7,1142.9 2096.2,1143.0 2100.8,1132.0 2105.4,1139.0 2110.0,1148.1 2114.5,1148.6 2119.1,1158.6 2123.7,1146.0 2128.3,1145.1 2132.8,1145.6 2137.4,1140.4 2142.0,1141.6 2146.6,1145.5 2151.1,1143.4 2155.7,1144.6 2160.3,1145.5 2164.9,1142.2 2169.4,1143.7 2174.0,1151.2 2178.6,1146.0 2183.2,1145.5 2187.7,1147.7 2192.3,1153.3 2196.9,1150.0 2201.5,1152.5 2206.1,1150.0 2210.6,1147.2 2215.2,1150.0 2219.8,1156.1 2224.4,1155.1 2228.9,1153.3 2233.5,1154.2 2238.1,1155.6 2242.7,1151.6 2247.2,1151.2 2251.8,1150.9 2256.4,1152.1 2261.0,1152.6 2265.5,1150.7 2270.1,1157.0 2274.7,1146.0 2279.3,1156.8 2283.8,1157.9 2288.4,1152.5 2293.0,1151.6 2297.6,1156.1 2302.1,1156.5 2306.7,1146.3 2311.3,1135.0 2315.9,1155.6 2320.5,1111.4 2325.0,1139.9 2329.6,1158.7 2334.2,1157.7 2338.8,1155.3 2343.3,1151.6 2347.9,1153.3 2352.5,1136.4 2357.1,1144.2 2361.6,1154.4 2366.2,1155.6 2370.8,1151.8 2375.4,1140.8 2379.9,1146.0 2384.5,1156.1 2389.1,1156.8 2393.7,1153.0 2398.2,1143.4 2402.8,1147.7 2407.4,1143.7 2412.0,1153.9 2416.5,1152.6 2421.1,1147.2 2425.7,1146.3 2430.3,1148.6 2434.9,1145.6 2439.4,1150.4 2444.0,1150.0 2448.6,1138.5 2453.2,1131.5 2457.7,1149.5 2462.3,1145.6 2466.9,1141.6 2471.5,1141.6 2476.0,1146.3 2480.6,1142.2 2485.2,1144.8 2489.8,1145.1 2494.3,1146.3 2498.9,1153.5 2503.5,1145.6 2508.1,1148.3 2512.6,1125.0 2517.2,1132.9 2521.8,1132.4 2526.4,1145.1 2530.9,1147.4 2535.5,1144.2 2540.1,1139.5 2544.7,1136.7 2549.3,1137.3 2553.8,1121.5 2558.4,1131.1 2563.0,1140.8 2567.6,1116.3 2572.1,1118.6 2576.7,1119.8 2581.3,1122.4 2585.9,1126.3 2590.4,1129.9 2595.0,1116.3 2599.6,1122.1 2604.2,1122.9 2608.7,1122.1 2613.3,1116.8 2617.9,1101.4 2622.5,1115.8 2627.0,1113.7 2631.6,1119.4 2636.2,1112.5 2640.8,1119.3 2645.3,1121.2 2649.9,1118.4 2654.5,1117.7 2659.1,1093.9 2663.7,1106.3 2668.2,1124.2 2672.8,1118.9 2677.4,1123.3 2682.0,1122.1 2686.5,1122.1 2691.1,1117.5 2695.7,1125.9 2700.3,1089.2 2704.8,1111.4 2709.4,1119.4 2714.0,1103.5 2718.6,1126.3 2723.1,1121.5 2727.7,1129.0 2732.3,1132.0 2736.9,1134.6 2741.4,1120.7 2746.0,1119.4 2750.6,1126.8 2755.2,1139.5 2759.7,1112.5 2764.3,1134.1 2768.9,1126.4 2773.5,1100.0 2773.5,1192.8" fill="#a3bfe8"/>
<polygon points="137.7,1192.8 137.7,1127.3 142.3,1127.3 146.9,1133.2 151.4,1125.6 156.0,1124.5 160.6,1133.2 165.2,1134.6 169.7,1133.4 174.3,1133.8 178.9,1132.9 183.5,1132.9 188.0,1133.2 192.6,1135.0 197.2,1137.6 201.8,1135.2 206.3,1137.3 210.9,1132.5 215.5,1124.2 220.1,1134.3 224.6,1131.1 229.2,1139.4 233.8,1135.5 238.4,1129.0 242.9,1134.6 247.5,1136.0 252.1,1138.5 256.7,1131.5 261.3,1132.4 265.8,1134.3 270.4,1135.2 275.0,1134.6 279.6,1132.0 284.1,1137.8 288.7,1123.3 293.3,1120.7 297.9,1112.5 302.4,1136.4 307.0,1135.5 311.6,1128.9 316.2,1139.0 320.7,1131.5 325.3,1142.5 329.9,1143.7 334.5,1145.5 339.0,1135.0 343.6,1136.0 348.2,1124.2 352.8,1135.0 357.3,1136.4 361.9,1136.0 366.5,1121.9 371.1,1137.3 375.7,1125.0 380.2,1137.3 384.8,1138.1 389.4,1127.7 394.0,1135.5 398.5,1137.8 403.1,1140.8 407.7,1140.8 412.3,1130.3 416.8,1130.3 421.4,1136.0 426.0,1138.1 430.6,1143.4 435.1,1139.9 439.7,1138.1 444.3,1139.9 448.9,1135.0 453.4,1136.4 458.0,1130.8 462.6,1131.1 467.2,1122.4 471.7,1129.4 476.3,1125.0 480.9,1120.1 485.5,1126.3 490.1,1122.9 494.6,1132.0 499.2,1131.5 503.8,1119.8 508.4,1125.9 512.9,1118.4 517.5,1132.4 522.1,1132.0 526.7,1132.0 531.2,1133.2 535.8,1135.5 540.4,1135.5 545.0,1127.7 549.5,1123.8 554.1,1132.4 558.7,1131.1 563.3,1135.5 567.8,1132.0 572.4,1128.0 577.0,1141.6 581.6,1143.0 586.1,1141.6 590.7,1143.7 595.3,1143.7 599.9,1145.6 604.5,1146.3 609.0,1146.5 613.6,1148.1 618.2,1145.5 622.8,1144.8 627.3,1150.0 631.9,1149.5 636.5,1146.9 641.1,1145.5 645.6,1153.3 650.2,1152.1 654.8,1149.5 659.4,1153.3 663.9,1151.8 668.5,1152.1 673.1,1155.1 677.7,1152.5 682.2,1146.0 686.8,1155.1 691.4,1159.1 696.0,1160.0 700.5,1156.5 705.1,1157.7 709.7,1157.7 714.3,1160.8 718.9,1162.1 723.4,1160.0 728.0,1161.2 732.6,1160.3 737.2,1160.5 741.7,1160.8 746.3,1164.9 750.9,1164.9 755.5,1165.6 760.0,1144.2 764.6,1161.7 769.2,1145.5 773.8,1155.6 778.3,1165.7 782.9,1168.4 787.5,1157.4 792.1,1163.5 796.6,1169.6 801.2,1174.3 805.8,1170.5 810.4,1172.6 814.9,1173.1 819.5,1173.1 824.1,1170.5 828.7,1170.1 833.3,1170.5 837.8,1171.9 842.4,1172.2 847.0,1172.2 851.6,1169.2 856.1,1169.1 860.7,1169.2 865.3,1170.8 869.9,1169.6 874.4,1168.2 879.0,1169.6 883.6,1169.6 888.2,1167.5 892.7,1170.1 897.3,1166.1 901.9,1168.2 906.5,1167.3 911.0,1168.7 915.6,1168.7 920.2,1169.9 924.8,1169.2 929.3,1169.2 933.9,1169.2 938.5,1169.9 943.1,1169.2 947.7,1170.1 952.2,1169.2 956.8,1168.4 961.4,1169.2 966.0,1168.7 970.5,1168.7 975.1,1169.1 979.7,1168.7 984.3,1167.8 988.8,1169.2 993.4,1168.7 998.0,1167.0 1002.6,1163.8 1007.1,1165.6 1011.7,1166.1 1016.3,1166.6 1020.9,1165.6 1025.4,1164.9 1030.0,1165.7 1034.6,1164.9 1039.2,1161.2 1043.7,1164.0 1048.3,1163.1 1052.9,1162.9 1057.5,1137.3 1062.1,1160.8 1066.6,1158.7 1071.2,1160.0 1075.8,1161.7 1080.4,1162.1 1084.9,1160.0 1089.5,1157.9 1094.1,1154.2 1098.7,1150.4 1103.2,1155.1 1107.8,1156.0 1112.4,1152.5 1117.0,1153.0 1121.5,1150.7 1126.1,1134.1 1130.7,1150.0 1135.3,1145.5 1139.8,1139.9 1144.4,1145.1 1149.0,1109.3 1153.6,1142.5 1158.1,1144.2 1162.7,1130.3 1167.3,1138.7 1171.9,1139.9 1176.5,1142.5 1181.0,1140.8 1185.6,1142.9 1190.2,1134.6 1194.8,1138.7 1199.3,1130.3 1203.9,1129.7 1208.5,1130.3 1213.1,1129.4 1217.6,1131.5 1222.2,1127.7 1226.8,1129.9 1231.4,1125.6 1235.9,1116.6 1240.5,1131.1 1245.1,1122.9 1249.7,1131.5 1254.2,1131.7 1258.8,1130.6 1263.4,1128.9 1268.0,1129.7 1272.5,1129.4 1277.1,1132.4 1281.7,1131.7 1286.3,1132.5 1290.9,1129.4 1295.4,1101.4 1300.0,1136.4 1304.6,1134.6 1309.2,1136.9 1313.7,1136.4 1318.3,1130.3 1322.9,1133.4 1327.5,1129.4 1332.0,1134.1 1336.6,1135.2 1341.2,1139.9 1345.8,1130.3 1350.3,1121.9 1354.9,1111.6 1359.5,1139.0 1364.1,1133.4 1368.6,1138.1 1373.2,1126.8 1377.8,1136.7 1382.4,1136.0 1386.9,1137.6 1391.5,1138.7 1396.1,1139.5 1400.7,1138.7 1405.3,1136.4 1409.8,1137.3 1414.4,1126.8 1419.0,1137.6 1423.6,1137.3 1428.1,1134.1 1432.7,1136.7 1437.3,1137.8 1441.9,1135.2 1446.4,1136.0 1451.0,1139.0 1455.6,1126.4 1460.2,1130.3 1464.7,1139.4 1469.3,1142.5 1473.9,1131.1 1478.5,1141.3 1483.0,1140.8 1487.6,1143.7 1492.2,1139.5 1496.8,1142.0 1501.3,1140.4 1505.9,1143.4 1510.5,1133.2 1515.1,1135.5 1519.7,1138.7 1524.2,1140.8 1528.8,1139.9 1533.4,1137.8 1538.0,1138.1 1542.5,1139.5 1547.1,1136.9 1551.7,1143.4 1556.3,1137.3 1560.8,1143.4 1565.4,1140.8 1570.0,1146.9 1574.6,1147.4 1579.1,1146.0 1583.7,1145.5 1588.3,1143.9 1592.9,1142.0 1597.4,1141.3 1602.0,1132.9 1606.6,1133.8 1611.2,1136.4 1615.7,1138.1 1620.3,1134.6 1624.9,1139.5 1629.5,1144.2 1634.1,1122.9 1638.6,1141.1 1643.2,1143.4 1647.8,1144.6 1652.4,1140.4 1656.9,1144.8 1661.5,1125.9 1666.1,1131.1 1670.7,1147.7 1675.2,1144.6 1679.8,1140.4 1684.4,1148.3 1689.0,1149.8 1693.5,1146.0 1698.1,1118.0 1702.7,1143.9 1707.3,1143.4 1711.8,1145.1 1716.4,1143.9 1721.0,1139.0 1725.6,1142.2 1730.1,1143.9 1734.7,1144.6 1739.3,1145.5 1743.9,1145.6 1748.5,1141.6 1753.0,1136.9 1757.6,1132.0 1762.2,1145.6 1766.8,1136.0 1771.3,1146.0 1775.9,1146.0 1780.5,1145.6 1785.1,1143.9 1789.6,1137.3 1794.2,1125.9 1798.8,1117.2 1803.4,1120.7 1807.9,1132.0 1812.5,1135.9 1817.1,1130.8 1821.7,1137.3 1826.2,1141.3 1830.8,1142.2 1835.4,1140.4 1840.0,1131.1 1844.5,1120.7 1849.1,1132.4 1853.7,1139.4 1858.3,1137.3 1862.9,1136.4 1867.4,1135.5 1872.0,1135.2 1876.6,1141.3 1881.2,1146.9 1885.7,1144.6 1890.3,1131.5 1894.9,1150.4 1899.5,1149.1 1904.0,1146.3 1908.6,1149.5 1913.2,1133.8 1917.8,1140.2 1922.3,1140.4 1926.9,1143.7 1931.5,1146.5 1936.1,1154.2 1940.6,1154.7 1945.2,1155.6 1949.8,1156.0 1954.4,1158.7 1958.9,1155.1 1963.5,1153.5 1968.1,1150.9 1972.7,1152.1 1977.3,1150.9 1981.8,1132.0 1986.4,1148.3 1991.0,1148.1 1995.6,1149.1 2000.1,1149.8 2004.7,1151.2 2009.3,1150.4 2013.9,1147.7 2018.4,1146.5 2023.0,1148.1 2027.6,1149.0 2032.2,1149.5 2036.7,1151.8 2041.3,1153.5 2045.9,1156.0 2050.5,1155.6 2055.0,1155.1 2059.6,1155.1 2064.2,1153.0 2068.8,1145.1 2073.3,1147.7 2077.9,1145.5 2082.5,1148.3 2087.1,1142.0 2091.7,1158.6 2096.2,1156.1 2100.8,1144.8 2105.4,1151.2 2110.0,1159.6 2114.5,1160.3 2119.1,1164.9 2123.7,1156.0 2128.3,1156.0 2132.8,1156.8 2137.4,1153.5 2142.0,1154.4 2146.6,1156.1 2151.1,1154.4 2155.7,1158.2 2160.3,1156.8 2164.9,1157.9 2169.4,1158.2 2174.0,1160.3 2178.6,1156.8 2183.2,1157.0 2187.7,1160.0 2192.3,1163.5 2196.9,1160.5 2201.5,1162.1 2206.1,1160.3 2210.6,1160.0 2215.2,1163.1 2219.8,1165.2 2224.4,1165.2 2228.9,1164.9 2233.5,1164.9 2238.1,1166.1 2242.7,1164.9 2247.2,1165.7 2251.8,1167.0 2256.4,1166.6 2261.0,1165.6 2265.5,1165.7 2270.1,1166.1 2274.7,1155.6 2279.3,1165.7 2283.8,1165.2 2288.4,1164.7 2293.0,1164.7 2297.6,1164.9 2302.1,1165.6 2306.7,1166.1 2311.3,1146.0 2315.9,1165.7 2320.5,1127.1 2325.0,1145.6 2329.6,1166.6 2334.2,1165.7 2338.8,1164.9 2343.3,1162.6 2347.9,1163.1 2352.5,1162.9 2357.1,1162.9 2361.6,1163.8 2366.2,1163.8 2370.8,1164.3 2375.4,1163.8 2379.9,1164.3 2384.5,1166.1 2389.1,1165.6 2393.7,1161.4 2398.2,1160.8 2402.8,1160.5 2407.4,1153.3 2412.0,1160.8 2416.5,1162.6 2421.1,1154.7 2425.7,1154.7 2430.3,1156.8 2434.9,1162.1 2439.4,1162.1 2444.0,1160.3 2448.6,1159.6 2453.2,1159.1 2457.7,1158.2 2462.3,1156.5 2466.9,1156.0 2471.5,1157.7 2476.0,1159.4 2480.6,1157.0 2485.2,1154.4 2489.8,1153.5 2494.3,1157.7 2498.9,1160.3 2503.5,1157.0 2508.1,1155.6 2512.6,1149.1 2517.2,1146.3 2521.8,1145.1 2526.4,1153.9 2530.9,1155.1 2535.5,1153.3 2540.1,1152.1 2544.7,1150.7 2549.3,1146.9 2553.8,1133.8 2558.4,1139.9 2563.0,1150.7 2567.6,1128.5 2572.1,1139.5 2576.7,1138.7 2581.3,1139.5 2585.9,1141.1 2590.4,1140.8 2595.0,1138.1 2599.6,1133.2 2604.2,1134.3 2608.7,1135.5 2613.3,1129.7 2617.9,1127.7 2622.5,1133.8 2627.0,1128.5 2631.6,1133.2 2636.2,1132.0 2640.8,1132.0 2645.3,1135.9 2649.9,1131.1 2654.5,1133.8 2659.1,1126.3 2663.7,1129.4 2668.2,1135.5 2672.8,1132.4 2677.4,1135.9 2682.0,1136.4 2686.5,1135.5 2691.1,1134.6 2695.7,1137.8 2700.3,1135.9 2704.8,1136.0 2709.4,1129.9 2714.0,1139.9 2718.6,1139.9 2723.1,1139.9 2727.7,1139.9 2732.3,1142.5 2736.9,1144.6 2741.4,1143.4 2746.0,1139.9 2750.6,1136.0 2755.2,1148.6 2759.7,1121.5 2764.3,1141.6 2768.9,1143.9 2773.5,1143.7 2773.5,1192.8" fill="#80d7cd"/>
<polyline points="137.7,1127.3 142.3,1127.3 146.9,1133.2 151.4,1125.6 156.0,1124.5 160.6,1133.2 165.2,1134.6 169.7,1133.4 174.3,1133.8 178.9,1132.9 183.5,1132.9 188.0,1133.2 192.6,1135.0 197.2,1137.6 201.8,1135.2 206.3,1137.3 210.9,1132.5 215.5,1124.2 220.1,1134.3 224.6,1131.1 229.2,1139.4 233.8,1135.5 238.4,1129.0 242.9,1134.6 247.5,1136.0 252.1,1138.5 256.7,1131.5 261.3,1132.4 265.8,1134.3 270.4,1135.2 275.0,1134.6 279.6,1132.0 284.1,1137.8 288.7,1123.3 293.3,1120.7 297.9,1112.5 302.4,1136.4 307.0,1135.5 311.6,1128.9 316.2,1139.0 320.7,1131.5 325.3,1142.5 329.9,1143.7 334.5,1145.5 339.0,1135.0 343.6,1136.0 348.2,1124.2 352.8,1135.0 357.3,1136.4 361.9,1136.0 366.5,1121.9 371.1,1137.3 375.7,1125.0 380.2,1137.3 384.8,1138.1 389.4,1127.7 394.0,1135.5 398.5,1137.8 403.1,1140.8 407.7,1140.8 412.3,1130.3 416.8,1130.3 421.4,1136.0 426.0,1138.1 430.6,1143.4 435.1,1139.9 439.7,1138.1 444.3,1139.9 448.9,1135.0 453.4,1136.4 458.0,1130.8 462.6,1131.1 467.2,1122.4 471.7,1129.4 476.3,1125.0 480.9,1120.1 485.5,1126.3 490.1,1122.9 494.6,1132.0 499.2,1131.5 503.8,1119.8 508.4,1125.9 512.9,1118.4 517.5,1132.4 522.1,1132.0 526.7,1132.0 531.2,1133.2 535.8,1135.5 540.4,1135.5 545.0,1127.7 549.5,1123.8 554.1,1132.4 558.7,1131.1 563.3,1135.5 567.8,1132.0 572.4,1128.0 577.0,1141.6 581.6,1143.0 586.1,1141.6 590.7,1143.7 595.3,1143.7 599.9,1145.6 604.5,1146.3 609.0,1146.5 613.6,1148.1 618.2,1145.5 622.8,1144.8 627.3,1150.0 631.9,1149.5 636.5,1146.9 641.1,1145.5 645.6,1153.3 650.2,1152.1 654.8,1149.5 659.4,1153.3 663.9,1151.8 668.5,1152.1 673.1,1155.1 677.7,1152.5 682.2,1146.0 686.8,1155.1 691.4,1159.1 696.0,1160.0 700.5,1156.5 705.1,1157.7 709.7,1157.7 714.3,1160.8 718.9,1162.1 723.4,1160.0 728.0,1161.2 732.6,1160.3 737.2,1160.5 741.7,1160.8 746.3,1164.9 750.9,1164.9 755.5,1165.6 760.0,1144.2 764.6,1161.7 769.2,1145.5 773.8,1155.6 778.3,1165.7 782.9,1168.4 787.5,1157.4 792.1,1163.5 796.6,1169.6 801.2,1174.3 805.8,1170.5 810.4,1172.6 814.9,1173.1 819.5,1173.1 824.1,1170.5 828.7,1170.1 833.3,1170.5 837.8,1171.9 842.4,1172.2 847.0,1172.2 851.6,1169.2 856.1,1169.1 860.7,1169.2 865.3,1170.8 869.9,1169.6 874.4,1168.2 879.0,1169.6 883.6,1169.6 888.2,1167.5 892.7,1170.1 897.3,1166.1 901.9,1168.2 906.5,1167.3 911.0,1168.7 915.6,1168.7 920.2,1169.9 924.8,1169.2 929.3,1169.2 933.9,1169.2 938.5,1169.9 943.1,1169.2 947.7,1170.1 952.2,1169.2 956.8,1168.4 961.4,1169.2 966.0,1168.7 970.5,1168.7 975.1,1169.1 979.7,1168.7 984.3,1167.8 988.8,1169.2 993.4,1168.7 998.0,1167.0 1002.6,1163.8 1007.1,1165.6 1011.7,1166.1 1016.3,1166.6 1020.9,1165.6 1025.4,1164.9 1030.0,1165.7 1034.6,1164.9 1039.2,1161.2 1043.7,1164.0 1048.3,1163.1 1052.9,1162.9 1057.5,1137.3 1062.1,1160.8 1066.6,1158.7 1071.2,1160.0 1075.8,1161.7 1080.4,1162.1 1084.9,1160.0 1089.5,1157.9 1094.1,1154.2 1098.7,1150.4 1103.2,1155.1 1107.8,1156.0 1112.4,1152.5 1117.0,1153.0 1121.5,1150.7 1126.1,1134.1 1130.7,1150.0 1135.3,1145.5 1139.8,1139.9 1144.4,1145.1 1149.0,1109.3 1153.6,1142.5 1158.1,1144.2 1162.7,1130.3 1167.3,1138.7 1171.9,1139.9 1176.5,1142.5 1181.0,1140.8 1185.6,1142.9 1190.2,1134.6 1194.8,1138.7 1199.3,1130.3 1203.9,1129.7 1208.5,1130.3 1213.1,1129.4 1217.6,1131.5 1222.2,1127.7 1226.8,1129.9 1231.4,1125.6 1235.9,1116.6 1240.5,1131.1 1245.1,1122.9 1249.7,1131.5 1254.2,1131.7 1258.8,1130.6 1263.4,1128.9 1268.0,1129.7 1272.5,1129.4 1277.1,1132.4 1281.7,1131.7 1286.3,1132.5 1290.9,1129.4 1295.4,1101.4 1300.0,1136.4 1304.6,1134.6 1309.2,1136.9 1313.7,1136.4 1318.3,1130.3 1322.9,1133.4 1327.5,1129.4 1332.0,1134.1 1336.6,1135.2 1341.2,1139.9 1345.8,1130.3 1350.3,1121.9 1354.9,1111.6 1359.5,1139.0 1364.1,1133.4 1368.6,1138.1 1373.2,1126.8 1377.8,1136.7 1382.4,1136.0 1386.9,1137.6 1391.5,1138.7 1396.1,1139.5 1400.7,1138.7 1405.3,1136.4 1409.8,1137.3 1414.4,1126.8 1419.0,1137.6 1423.6,1137.3 1428.1,1134.1 1432.7,1136.7 1437.3,1137.8 1441.9,1135.2 1446.4,1136.0 1451.0,1139.0 1455.6,1126.4 1460.2,1130.3 1464.7,1139.4 1469.3,1142.5 1473.9,1131.1 1478.5,1141.3 1483.0,1140.8 1487.6,1143.7 1492.2,1139.5 1496.8,1142.0 1501.3,1140.4 1505.9,1143.4 1510.5,1133.2 1515.1,1135.5 1519.7,1138.7 1524.2,1140.8 1528.8,1139.9 1533.4,1137.8 1538.0,1138.1 1542.5,1139.5 1547.1,1136.9 1551.7,1143.4 1556.3,1137.3 1560.8,1143.4 1565.4,1140.8 1570.0,1146.9 1574.6,1147.4 1579.1,1146.0 1583.7,1145.5 1588.3,1143.9 1592.9,1142.0 1597.4,1141.3 1602.0,1132.9 1606.6,1133.8 1611.2,1136.4 1615.7,1138.1 1620.3,1134.6 1624.9,1139.5 1629.5,1144.2 1634.1,1122.9 1638.6,1141.1 1643.2,1143.4 1647.8,1144.6 1652.4,1140.4 1656.9,1144.8 1661.5,1125.9 1666.1,1131.1 1670.7,1147.7 1675.2,1144.6 1679.8,1140.4 1684.4,1148.3 1689.0,1149.8 1693.5,1146.0 1698.1,1118.0 1702.7,1143.9 1707.3,1143.4 1711.8,1145.1 1716.4,1143.9 1721.0,1139.0 1725.6,1142.2 1730.1,1143.9 1734.7,1144.6 1739.3,1145.5 1743.9,1145.6 1748.5,1141.6 1753.0,1136.9 1757.6,1132.0 1762.2,1145.6 1766.8,1136.0 1771.3,1146.0 1775.9,1146.0 1780.5,1145.6 1785.1,1143.9 1789.6,1137.3 1794.2,1125.9 1798.8,1117.2 1803.4,1120.7 1807.9,1132.0 1812.5,1135.9 1817.1,1130.8 1821.7,1137.3 1826.2,1141.3 1830.8,1142.2 1835.4,1140.4 1840.0,1131.1 1844.5,1120.7 1849.1,1132.4 1853.7,1139.4 1858.3,1137.3 1862.9,1136.4 1867.4,1135.5 1872.0,1135.2 1876.6,1141.3 1881.2,1146.9 1885.7,1144.6 1890.3,1131.5 1894.9,1150.4 1899.5,1149.1 1904.0,1146.3 1908.6,1149.5 1913.2,1133.8 1917.8,1140.2 1922.3,1140.4 1926.9,1143.7 1931.5,1146.5 1936.1,1154.2 1940.6,1154.7 1945.2,1155.6 1949.8,1156.0 1954.4,1158.7 1958.9,1155.1 1963.5,1153.5 1968.1,1150.9 1972.7,1152.1 1977.3,1150.9 1981.8,1132.0 1986.4,1148.3 1991.0,1148.1 1995.6,1149.1 2000.1,1149.8 2004.7,1151.2 2009.3,1150.4 2013.9,1147.7 2018.4,1146.5 2023.0,1148.1 2027.6,1149.0 2032.2,1149.5 2036.7,1151.8 2041.3,1153.5 2045.9,1156.0 2050.5,1155.6 2055.0,1155.1 2059.6,1155.1 2064.2,1153.0 2068.8,1145.1 2073.3,1147.7 2077.9,1145.5 2082.5,1148.3 2087.1,1142.0 2091.7,1158.6 2096.2,1156.1 2100.8,1144.8 2105.4,1151.2 2110.0,1159.6 2114.5,1160.3 2119.1,1164.9 2123.7,1156.0 2128.3,1156.0 2132.8,1156.8 2137.4,1153.5 2142.0,1154.4 2146.6,1156.1 2151.1,1154.4 2155.7,1158.2 2160.3,1156.8 2164.9,1157.9 2169.4,1158.2 2174.0,1160.3 2178.6,1156.8 2183.2,1157.0 2187.7,1160.0 2192.3,1163.5 2196.9,1160.5 2201.5,1162.1 2206.1,1160.3 2210.6,1160.0 2215.2,1163.1 2219.8,1165.2 2224.4,1165.2 2228.9,1164.9 2233.5,1164.9 2238.1,1166.1 2242.7,1164.9 2247.2,1165.7 2251.8,1167.0 2256.4,1166.6 2261.0,1165.6 2265.5,1165.7 2270.1,1166.1 2274.7,1155.6 2279.3,1165.7 2283.8,1165.2 2288.4,1164.7 2293.0,1164.7 2297.6,1164.9 2302.1,1165.6 2306.7,1166.1 2311.3,1146.0 2315.9,1165.7 2320.5,1127.1 2325.0,1145.6 2329.6,1166.6 2334.2,1165.7 2338.8,1164.9 2343.3,1162.6 2347.9,1163.1 2352.5,1162.9 2357.1,1162.9 2361.6,1163.8 2366.2,1163.8 2370.8,1164.3 2375.4,1163.8 2379.9,1164.3 2384.5,1166.1 2389.1,1165.6 2393.7,1161.4 2398.2,1160.8 2402.8,1160.5 2407.4,1153.3 2412.0,1160.8 2416.5,1162.6 2421.1,1154.7 2425.7,1154.7 2430.3,1156.8 2434.9,1162.1 2439.4,1162.1 2444.0,1160.3 2448.6,1159.6 2453.2,1159.1 2457.7,1158.2 2462.3,1156.5 2466.9,1156.0 2471.5,1157.7 2476.0,1159.4 2480.6,1157.0 2485.2,1154.4 2489.8,1153.5 2494.3,1157.7 2498.9,1160.3 2503.5,1157.0 2508.1,1155.6 2512.6,1149.1 2517.2,1146.3 2521.8,1145.1 2526.4,1153.9 2530.9,1155.1 2535.5,1153.3 2540.1,1152.1 2544.7,1150.7 2549.3,1146.9 2553.8,1133.8 2558.4,1139.9 2563.0,1150.7 2567.6,1128.5 2572.1,1139.5 2576.7,1138.7 2581.3,1139.5 2585.9,1141.1 2590.4,1140.8 2595.0,1138.1 2599.6,1133.2 2604.2,1134.3 2608.7,1135.5 2613.3,1129.7 2617.9,1127.7 2622.5,1133.8 2627.0,1128.5 2631.6,1133.2 2636.2,1132.0 2640.8,1132.0 2645.3,1135.9 2649.9,1131.1 2654.5,1133.8 2659.1,1126.3 2663.7,1129.4 2668.2,1135.5 2672.8,1132.4 2677.4,1135.9 2682.0,1136.4 2686.5,1135.5 2691.1,1134.6 2695.7,1137.8 2700.3,1135.9 2704.8,1136.0 2709.4,1129.9 2714.0,1139.9 2718.6,1139.9 2723.1,1139.9 2727.7,1139.9 2732.3,1142.5 2736.9,1144.6 2741.4,1143.4 2746.0,1139.9 2750.6,1136.0 2755.2,1148.6 2759.7,1121.5 2764.3,1141.6 2768.9,1143.9 2773.5,1143.7" fill="none" stroke="#86e0ca" stroke-width="1.2" stroke-linejoin="round"/>
<polyline points="137.7,1115.8 142.3,1115.8 146.9,1119.4 151.4,1114.2 156.0,1115.8 160.6,1119.8 165.2,1126.4 169.7,1120.8 174.3,1121.9 178.9,1119.8 183.5,1124.7 188.0,1126.4 192.6,1113.2 197.2,1111.6 201.8,1116.8 206.3,1107.6 210.9,1114.2 215.5,1109.8 220.1,1100.0 224.6,1093.9 229.2,1116.3 233.8,1100.2 238.4,1102.3 242.9,1120.1 247.5,1118.9 252.1,1118.4 256.7,1095.3 261.3,1089.6 265.8,1115.8 270.4,1119.8 275.0,1116.8 279.6,1107.2 284.1,1109.0 288.7,1109.3 293.3,1105.8 297.9,1089.6 302.4,1101.4 307.0,1123.8 311.6,1116.8 316.2,1117.7 320.7,1115.8 325.3,1107.2 329.9,1128.2 334.5,1132.4 339.0,1122.4 343.6,1116.3 348.2,1102.3 352.8,1110.2 357.3,1108.4 361.9,1123.8 366.5,1107.9 371.1,1121.9 375.7,1107.6 380.2,1122.4 384.8,1118.0 389.4,1113.7 394.0,1118.0 398.5,1114.2 403.1,1110.2 407.7,1121.9 412.3,1120.1 416.8,1105.8 421.4,1121.2 426.0,1112.5 430.6,1103.7 435.1,1125.4 439.7,1122.9 444.3,1129.9 448.9,1093.2 453.4,1102.0 458.0,1094.5 462.6,1106.2 467.2,1106.2 471.7,1109.8 476.3,1068.1 480.9,1104.1 485.5,1100.0 490.1,1103.7 494.6,1111.9 499.2,1109.7 503.8,1100.0 508.4,1101.1 512.9,1098.5 517.5,1110.7 522.1,1113.7 526.7,1107.6 531.2,1114.9 535.8,1117.5 540.4,1117.7 545.0,1093.6 549.5,1089.7 554.1,1107.6 558.7,1109.0 563.3,1119.4 567.8,1115.8 572.4,1110.7 577.0,1122.9 581.6,1119.3 586.1,1121.5 590.7,1122.9 595.3,1127.1 599.9,1115.9 604.5,1114.5 609.0,1118.9 613.6,1118.0 618.2,1119.3 622.8,1116.3 627.3,1128.2 631.9,1127.7 636.5,1124.2 641.1,1126.3 645.6,1139.9 650.2,1138.5 654.8,1130.8 659.4,1135.9 663.9,1135.2 668.5,1131.5 673.1,1141.6 677.7,1133.8 682.2,1132.0 686.8,1142.2 691.4,1146.5 696.0,1148.3 700.5,1141.3 705.1,1140.8 709.7,1145.1 714.3,1148.1 718.9,1148.3 723.4,1148.3 728.0,1149.5 732.6,1146.5 737.2,1149.5 741.7,1143.7 746.3,1154.4 750.9,1156.1 755.5,1156.1 760.0,1132.0 764.6,1151.2 769.2,1136.4 773.8,1127.3 778.3,1156.5 782.9,1158.7 787.5,1147.7 792.1,1151.8 796.6,1161.7 801.2,1168.2 805.8,1162.2 810.4,1166.1 814.9,1166.1 819.5,1165.6 824.1,1162.6 828.7,1159.6 833.3,1162.2 837.8,1160.3 842.4,1163.5 847.0,1164.7 851.6,1161.2 856.1,1155.6 860.7,1160.3 865.3,1163.1 869.9,1160.3 874.4,1136.4 879.0,1160.3 883.6,1159.1 888.2,1156.0 892.7,1157.9 897.3,1152.1 901.9,1155.6 906.5,1151.6 911.0,1153.9 915.6,1152.6 920.2,1158.6 924.8,1155.6 929.3,1155.6 933.9,1156.0 938.5,1156.0 943.1,1155.6 947.7,1157.4 952.2,1155.6 956.8,1155.6 961.4,1157.4 966.0,1156.1 970.5,1154.7 975.1,1157.4 979.7,1157.4 984.3,1155.1 988.8,1159.1 993.4,1152.5 998.0,1151.8 1002.6,1149.5 1007.1,1151.8 1011.7,1154.2 1016.3,1155.1 1020.9,1154.7 1025.4,1142.0 1030.0,1141.1 1034.6,1146.9 1039.2,1146.0 1043.7,1147.7 1048.3,1149.1 1052.9,1144.8 1057.5,1120.1 1062.1,1147.2 1066.6,1137.3 1071.2,1145.5 1075.8,1150.0 1080.4,1149.1 1084.9,1137.3 1089.5,1141.3 1094.1,1135.5 1098.7,1135.9 1103.2,1141.6 1107.8,1139.4 1112.4,1129.4 1117.0,1139.0 1121.5,1137.8 1126.1,1121.5 1130.7,1136.7 1135.3,1131.1 1139.8,1126.4 1144.4,1131.7 1149.0,1092.7 1153.6,1125.0 1158.1,1130.6 1162.7,1116.3 1167.3,1120.7 1171.9,1127.1 1176.5,1126.8 1181.0,1125.4 1185.6,1128.2 1190.2,1101.8 1194.8,1125.0 1199.3,1114.5 1203.9,1109.7 1208.5,1112.3 1213.1,1109.7 1217.6,1115.1 1222.2,1091.3 1226.8,1111.1 1231.4,1100.9 1235.9,1097.6 1240.5,1116.8 1245.1,1099.7 1249.7,1109.8 1254.2,1106.7 1258.8,1111.4 1263.4,1103.2 1268.0,1103.2 1272.5,1111.4 1277.1,1103.5 1281.7,1111.9 1286.3,1098.5 1290.9,1112.8 1295.4,1074.9 1300.0,1118.0 1304.6,1120.1 1309.2,1120.7 1313.7,1119.4 1318.3,1112.5 1322.9,1109.3 1327.5,1098.5 1332.0,1104.6 1336.6,1114.5 1341.2,1123.6 1345.8,1107.9 1350.3,1105.8 1354.9,1083.1 1359.5,1123.3 1364.1,1115.4 1368.6,1121.2 1373.2,1098.0 1377.8,1118.6 1382.4,1119.3 1386.9,1113.2 1391.5,1116.8 1396.1,1109.0 1400.7,1106.2 1405.3,1091.3 1409.8,1107.9 1414.4,1108.8 1419.0,1115.8 1423.6,1099.2 1428.1,1114.9 1432.7,1119.4 1437.3,1122.4 1441.9,1079.1 1446.4,1102.0 1451.0,1103.2 1455.6,1104.1 1460.2,1094.5 1464.7,1121.5 1469.3,1127.3 1473.9,1110.5 1478.5,1121.5 1483.0,1111.1 1487.6,1128.5 1492.2,1117.2 1496.8,1126.8 1501.3,1122.4 1505.9,1115.9 1510.5,1118.0 1515.1,1111.4 1519.7,1127.3 1524.2,1112.5 1528.8,1114.9 1533.4,1122.4 1538.0,1131.5 1542.5,1130.3 1547.1,1124.5 1551.7,1136.9 1556.3,1128.5 1560.8,1130.8 1565.4,1132.9 1570.0,1132.5 1574.6,1140.2 1579.1,1134.1 1583.7,1134.1 1588.3,1136.0 1592.9,1135.5 1597.4,1107.6 1602.0,1112.8 1606.6,1121.5 1611.2,1126.4 1615.7,1118.4 1620.3,1126.8 1624.9,1131.1 1629.5,1126.8 1634.1,1118.0 1638.6,1135.2 1643.2,1130.8 1647.8,1132.9 1652.4,1114.5 1656.9,1138.1 1661.5,1107.0 1666.1,1122.1 1670.7,1128.9 1675.2,1129.0 1679.8,1132.5 1684.4,1135.9 1689.0,1134.6 1693.5,1135.2 1698.1,1107.2 1702.7,1121.9 1707.3,1132.0 1711.8,1122.8 1716.4,1125.9 1721.0,1119.4 1725.6,1132.5 1730.1,1135.0 1734.7,1130.8 1739.3,1137.3 1743.9,1138.1 1748.5,1129.7 1753.0,1128.0 1757.6,1119.3 1762.2,1126.3 1766.8,1121.5 1771.3,1133.4 1775.9,1137.3 1780.5,1123.3 1785.1,1121.5 1789.6,1129.0 1794.2,1104.9 1798.8,1080.8 1803.4,1086.9 1807.9,1115.1 1812.5,1121.5 1817.1,1115.8 1821.7,1122.9 1826.2,1117.2 1830.8,1128.5 1835.4,1133.4 1840.0,1120.7 1844.5,1107.6 1849.1,1111.1 1853.7,1118.6 1858.3,1117.5 1862.9,1116.3 1867.4,1122.1 1872.0,1102.3 1876.6,1120.7 1881.2,1132.4 1885.7,1120.7 1890.3,1122.1 1894.9,1121.5 1899.5,1124.7 1904.0,1138.1 1908.6,1125.4 1913.2,1126.4 1917.8,1114.5 1922.3,1125.9 1926.9,1134.6 1931.5,1139.9 1936.1,1138.1 1940.6,1146.0 1945.2,1146.9 1949.8,1149.5 1954.4,1149.0 1958.9,1147.4 1963.5,1139.5 1968.1,1143.4 1972.7,1143.4 1977.3,1138.1 1981.8,1122.1 1986.4,1138.5 1991.0,1135.9 1995.6,1135.5 2000.1,1137.8 2004.7,1141.6 2009.3,1139.9 2013.9,1132.5 2018.4,1132.4 2023.0,1131.5 2027.6,1135.2 2032.2,1131.5 2036.7,1138.1 2041.3,1141.6 2045.9,1140.8 2050.5,1145.5 2055.0,1144.6 2059.6,1142.5 2064.2,1141.3 2068.8,1132.9 2073.3,1136.4 2077.9,1135.9 2082.5,1134.6 2087.1,1131.5 2091.7,1142.9 2096.2,1143.0 2100.8,1132.0 2105.4,1139.0 2110.0,1148.1 2114.5,1148.6 2119.1,1158.6 2123.7,1146.0 2128.3,1145.1 2132.8,1145.6 2137.4,1140.4 2142.0,1141.6 2146.6,1145.5 2151.1,1143.4 2155.7,1144.6 2160.3,1145.5 2164.9,1142.2 2169.4,1143.7 2174.0,1151.2 2178.6,1146.0 2183.2,1145.5 2187.7,1147.7 2192.3,1153.3 2196.9,1150.0 2201.5,1152.5 2206.1,1150.0 2210.6,1147.2 2215.2,1150.0 2219.8,1156.1 2224.4,1155.1 2228.9,1153.3 2233.5,1154.2 2238.1,1155.6 2242.7,1151.6 2247.2,1151.2 2251.8,1150.9 2256.4,1152.1 2261.0,1152.6 2265.5,1150.7 2270.1,1157.0 2274.7,1146.0 2279.3,1156.8 2283.8,1157.9 2288.4,1152.5 2293.0,1151.6 2297.6,1156.1 2302.1,1156.5 2306.7,1146.3 2311.3,1135.0 2315.9,1155.6 2320.5,1111.4 2325.0,1139.9 2329.6,1158.7 2334.2,1157.7 2338.8,1155.3 2343.3,1151.6 2347.9,1153.3 2352.5,1136.4 2357.1,1144.2 2361.6,1154.4 2366.2,1155.6 2370.8,1151.8 2375.4,1140.8 2379.9,1146.0 2384.5,1156.1 2389.1,1156.8 2393.7,1153.0 2398.2,1143.4 2402.8,1147.7 2407.4,1143.7 2412.0,1153.9 2416.5,1152.6 2421.1,1147.2 2425.7,1146.3 2430.3,1148.6 2434.9,1145.6 2439.4,1150.4 2444.0,1150.0 2448.6,1138.5 2453.2,1131.5 2457.7,1149.5 2462.3,1145.6 2466.9,1141.6 2471.5,1141.6 2476.0,1146.3 2480.6,1142.2 2485.2,1144.8 2489.8,1145.1 2494.3,1146.3 2498.9,1153.5 2503.5,1145.6 2508.1,1148.3 2512.6,1125.0 2517.2,1132.9 2521.8,1132.4 2526.4,1145.1 2530.9,1147.4 2535.5,1144.2 2540.1,1139.5 2544.7,1136.7 2549.3,1137.3 2553.8,1121.5 2558.4,1131.1 2563.0,1140.8 2567.6,1116.3 2572.1,1118.6 2576.7,1119.8 2581.3,1122.4 2585.9,1126.3 2590.4,1129.9 2595.0,1116.3 2599.6,1122.1 2604.2,1122.9 2608.7,1122.1 2613.3,1116.8 2617.9,1101.4 2622.5,1115.8 2627.0,1113.7 2631.6,1119.4 2636.2,1112.5 2640.8,1119.3 2645.3,1121.2 2649.9,1118.4 2654.5,1117.7 2659.1,1093.9 2663.7,1106.3 2668.2,1124.2 2672.8,1118.9 2677.4,1123.3 2682.0,1122.1 2686.5,1122.1 2691.1,1117.5 2695.7,1125.9 2700.3,1089.2 2704.8,1111.4 2709.4,1119.4 2714.0,1103.5 2718.6,1126.3 2723.1,1121.5 2727.7,1129.0 2732.3,1132.0 2736.9,1134.6 2741.4,1120.7 2746.0,1119.4 2750.6,1126.8 2755.2,1139.5 2759.7,1112.5 2764.3,1134.1 2768.9,1126.4 2773.5,1100.0" fill="none" stroke="#4a8cf7" stroke-width="1.6" stroke-linejoin="round"/>
<rect x="1609.9" y="542.8" width="1.25" height="650" fill="#88898d"/>
<g font-size="18.3" fill="#666" stroke="#666" stroke-width="0.3">
<text x="120" y="1198.8" text-anchor="end" textLength="46.0" lengthAdjust="spacingAndGlyphs">0 bps</text>
<text x="120" y="1105.9" text-anchor="end" textLength="62.3" lengthAdjust="spacingAndGlyphs">5 Mbps</text>
<text x="120" y="1013.1" text-anchor="end" textLength="72.3" lengthAdjust="spacingAndGlyphs">10 Mbps</text>
<text x="120" y="920.2" text-anchor="end" textLength="72.3" lengthAdjust="spacingAndGlyphs">15 Mbps</text>
<text x="120" y="827.4" text-anchor="end" textLength="72.3" lengthAdjust="spacingAndGlyphs">20 Mbps</text>
<text x="120" y="734.5" text-anchor="end" textLength="72.3" lengthAdjust="spacingAndGlyphs">25 Mbps</text>
<text x="120" y="641.7" text-anchor="end" textLength="72.3" lengthAdjust="spacingAndGlyphs">30 Mbps</text>
<text x="120" y="548.8" text-anchor="end" textLength="72.3" lengthAdjust="spacingAndGlyphs">35 Mbps</text>
<text transform="translate(145.1,1216.8) rotate(-50)" text-anchor="end" dominant-baseline="central">4:55:00PM</text>
<text transform="translate(181.7,1216.8) rotate(-50)" text-anchor="end" dominant-baseline="central">5:35:00PM</text>
<text transform="translate(218.3,1216.8) rotate(-50)" text-anchor="end" dominant-baseline="central">6:15:00PM</text>
<text transform="translate(254.9,1216.8) rotate(-50)" text-anchor="end" dominant-baseline="central">6:55:00PM</text>
<text transform="translate(291.5,1216.8) rotate(-50)" text-anchor="end" dominant-baseline="central">7:35:00PM</text>
<text transform="translate(328.1,1216.8) rotate(-50)" text-anchor="end" dominant-baseline="central">8:15:00PM</text>
<text transform="translate(364.7,1216.8) rotate(-50)" text-anchor="end" dominant-baseline="central">8:55:00PM</text>
<text transform="translate(401.4,1216.8) rotate(-50)" text-anchor="end" dominant-baseline="central">9:35:00PM</text>
<text transform="translate(438.0,1216.8) rotate(-50)" text-anchor="end" dominant-baseline="central">10:15:00PM</text>
<text transform="translate(474.6,1216.8) rotate(-50)" text-anchor="end" dominant-baseline="central">10:55:00PM</text>
<text transform="translate(511.2,1216.8) rotate(-50)" text-anchor="end" dominant-baseline="central">11:35:00PM</text>
<text transform="translate(547.8,1216.8) rotate(-50)" text-anchor="end" dominant-baseline="central">12:15:00AM</text>
<text transform="translate(584.4,1216.8) rotate(-50)" text-anchor="end" dominant-baseline="central">12:55:00AM</text>
<text transform="translate(621.0,1216.8) rotate(-50)" text-anchor="end" dominant-baseline="central">1:35:00AM</text>
<text transform="translate(657.6,1216.8) rotate(-50)" text-anchor="end" dominant-baseline="central">2:15:00AM</text>
<text transform="translate(694.2,1216.8) rotate(-50)" text-anchor="end" dominant-baseline="central">2:55:00AM</text>
<text transform="translate(730.8,1216.8) rotate(-50)" text-anchor="end" dominant-baseline="central">3:35:00AM</text>
<text transform="translate(767.4,1216.8) rotate(-50)" text-anchor="end" dominant-baseline="central">4:15:00AM</text>
<text transform="translate(804.0,1216.8) rotate(-50)" text-anchor="end" dominant-baseline="central">4:55:00AM</text>
<text transform="translate(840.7,1216.8) rotate(-50)" text-anchor="end" dominant-baseline="central">5:35:00AM</text>
<text transform="translate(877.3,1216.8) rotate(-50)" text-anchor="end" dominant-baseline="central">6:15:00AM</text>
<text transform="translate(913.9,1216.8) rotate(-50)" text-anchor="end" dominant-baseline="central">6:55:00AM</text>
<text transform="translate(950.5,1216.8) rotate(-50)" text-anchor="end" dominant-baseline="central">7:35:00AM</text>
<text transform="translate(987.1,1216.8) rotate(-50)" text-anchor="end" dominant-baseline="central">8:15:00AM</text>
<text transform="translate(1023.7,1216.8) rotate(-50)" text-anchor="end" dominant-baseline="central">8:55:00AM</text>
<text transform="translate(1060.3,1216.8) rotate(-50)" text-anchor="end" dominant-baseline="central">9:35:00AM</text>
<text transform="translate(1096.9,1216.8) rotate(-50)" text-anchor="end" dominant-baseline="central">10:15:00AM</text>
<text transform="translate(1133.5,1216.8) rotate(-50)" text-anchor="end" dominant-baseline="central">10:55:00AM</text>
<text transform="translate(1170.1,1216.8) rotate(-50)" text-anchor="end" dominant-baseline="central">11:35:00AM</text>
<text transform="translate(1206.7,1216.8) rotate(-50)" text-anchor="end" dominant-baseline="central">12:15:00PM</text>
<text transform="translate(1243.3,1216.8) rotate(-50)" text-anchor="end" dominant-baseline="central">12:55:00PM</text>
<text transform="translate(1279.9,1216.8) rotate(-50)" text-anchor="end" dominant-baseline="central">1:35:00PM</text>
<text transform="translate(1316.6,1216.8) rotate(-50)" text-anchor="end" dominant-baseline="central">2:15:00PM</text>
<text transform="translate(1353.2,1216.8) rotate(-50)" text-anchor="end" dominant-baseline="central">2:55:00PM</text>
<text transform="translate(1389.8,1216.8) rotate(-50)" text-anchor="end" dominant-baseline="central">3:35:00PM</text>
<text transform="translate(1426.4,1216.8) rotate(-50)" text-anchor="end" dominant-baseline="central">4:15:00PM</text>
<text transform="translate(1463.0,1216.8) rotate(-50)" text-anchor="end" dominant-baseline="central">4:55:00PM</text>
<text transform="translate(1499.6,1216.8) rotate(-50)" text-anchor="end" dominant-baseline="central">5:35:00PM</text>
<text transform="translate(1536.2,1216.8) rotate(-50)" text-anchor="end" dominant-baseline="central">6:15:00PM</text>
<text transform="translate(1572.8,1216.8) rotate(-50)" text-anchor="end" dominant-baseline="central">6:55:00PM</text>
<text transform="translate(1609.4,1216.8) rotate(-50)" text-anchor="end" dominant-baseline="central">7:35:00PM</text>
<text transform="translate(1646.0,1216.8) rotate(-50)" text-anchor="end" dominant-baseline="central">8:15:00PM</text>
<text transform="translate(1682.6,1216.8) rotate(-50)" text-anchor="end" dominant-baseline="central">8:55:00PM</text>
<text transform="translate(1719.2,1216.8) rotate(-50)" text-anchor="end" dominant-baseline="central">9:35:00PM</text>
<text transform="translate(1755.9,1216.8) rotate(-50)" text-anchor="end" dominant-baseline="central">10:15:00PM</text>
<text transform="translate(1792.5,1216.8) rotate(-50)" text-anchor="end" dominant-baseline="central">10:55:00PM</text>
<text transform="translate(1829.1,1216.8) rotate(-50)" text-anchor="end" dominant-baseline="central">11:35:00PM</text>
<text transform="translate(1865.7,1216.8) rotate(-50)" text-anchor="end" dominant-baseline="central">12:15:00AM</text>
<text transform="translate(1902.3,1216.8) rotate(-50)" text-anchor="end" dominant-baseline="central">12:55:00AM</text>
<text transform="translate(1938.9,1216.8) rotate(-50)" text-anchor="end" dominant-baseline="central">1:35:00AM</text>
<text transform="translate(1975.5,1216.8) rotate(-50)" text-anchor="end" dominant-baseline="central">2:15:00AM</text>
<text transform="translate(2012.1,1216.8) rotate(-50)" text-anchor="end" dominant-baseline="central">2:55:00AM</text>
<text transform="translate(2048.7,1216.8) rotate(-50)" text-anchor="end" dominant-baseline="central">3:35:00AM</text>
<text transform="translate(2085.3,1216.8) rotate(-50)" text-anchor="end" dominant-baseline="central">4:15:00AM</text>
<text transform="translate(2121.9,1216.8) rotate(-50)" text-anchor="end" dominant-baseline="central">4:55:00AM</text>
<text transform="translate(2158.5,1216.8) rotate(-50)" text-anchor="end" dominant-baseline="central">5:35:00AM</text>
<text transform="translate(2195.1,1216.8) rotate(-50)" text-anchor="end" dominant-baseline="central">6:15:00AM</text>
<text transform="translate(2231.8,1216.8) rotate(-50)" text-anchor="end" dominant-baseline="central">6:55:00AM</text>
<text transform="translate(2268.4,1216.8) rotate(-50)" text-anchor="end" dominant-baseline="central">7:35:00AM</text>
<text transform="translate(2305.0,1216.8) rotate(-50)" text-anchor="end" dominant-baseline="central">8:15:00AM</text>
<text transform="translate(2341.6,1216.8) rotate(-50)" text-anchor="end" dominant-baseline="central">8:55:00AM</text>
<text transform="translate(2378.2,1216.8) rotate(-50)" text-anchor="end" dominant-baseline="central">9:35:00AM</text>
<text transform="translate(2414.8,1216.8) rotate(-50)" text-anchor="end" dominant-baseline="central">10:15:00AM</text>
<text transform="translate(2451.4,1216.8) rotate(-50)" text-anchor="end" dominant-baseline="central">10:55:00AM</text>
<text transform="translate(2488.0,1216.8) rotate(-50)" text-anchor="end" dominant-baseline="central">11:35:00AM</text>
<text transform="translate(2524.6,1216.8) rotate(-50)" text-anchor="end" dominant-baseline="central">12:15:00PM</text>
<text transform="translate(2561.2,1216.8) rotate(-50)" text-anchor="end" dominant-baseline="central">12:55:00PM</text>
<text transform="translate(2597.8,1216.8) rotate(-50)" text-anchor="end" dominant-baseline="central">1:35:00PM</text>
<text transform="translate(2634.4,1216.8) rotate(-50)" text-anchor="end" dominant-baseline="central">2:15:00PM</text>
<text transform="translate(2671.1,1216.8) rotate(-50)" text-anchor="end" dominant-baseline="central">2:55:00PM</text>
<text transform="translate(2707.7,1216.8) rotate(-50)" text-anchor="end" dominant-baseline="central">3:35:00PM</text>
<text transform="translate(2744.3,1216.8) rotate(-50)" text-anchor="end" dominant-baseline="central">4:15:00PM</text>
<text transform="translate(2780.9,1216.8) rotate(-50)" text-anchor="end" dominant-baseline="central">4:55:00PM</text>
</g>
<g font-size="18.2" fill="#666">
<rect x="1028.6" y="1319.7" width="60.2" height="18.4" fill="#d6ecfb" stroke="#4b8bf5" stroke-width="1.8"/>
<text id="lg1" stroke="#666" stroke-width="0.3" x="1098" y="1335" textLength="159.5" lengthAdjust="spacing">Входящий трафик</text>
<rect x="1272.8" y="1319.7" width="60.4" height="18.4" fill="#a3f0cb" stroke="#98edc4" stroke-width="1.2"/>
<text id="lg2" stroke="#666" stroke-width="0.3" x="1342.6" y="1335" textLength="211" lengthAdjust="spacing">Пропущено на источник</text>
<rect x="1569.4" y="1319.7" width="60.4" height="18.4" fill="#babfe3" stroke="#b3b9e0" stroke-width="1.2"/>
<text id="lg3" stroke="#666" stroke-width="0.3" x="1638.9" y="1335" textLength="170" lengthAdjust="spacing">Исходящий трафик</text>
</g>
</svg>
<div class="abs" style="left:2840px;top:0;width:2px;height:1394px;background:#e8e8e8"></div>
</div><script>(function(){try{var w=window.innerWidth||2842,z=w/2842;if(Math.abs(z-1)>0.01){var r=document.getElementById('root');r.style.transformOrigin='0 0';r.style.transform='scale('+z+')';document.body.style.width=(2842*z)+'px';document.body.style.height=(1394*z)+'px';}}catch(e){}})();</script></body></html>
